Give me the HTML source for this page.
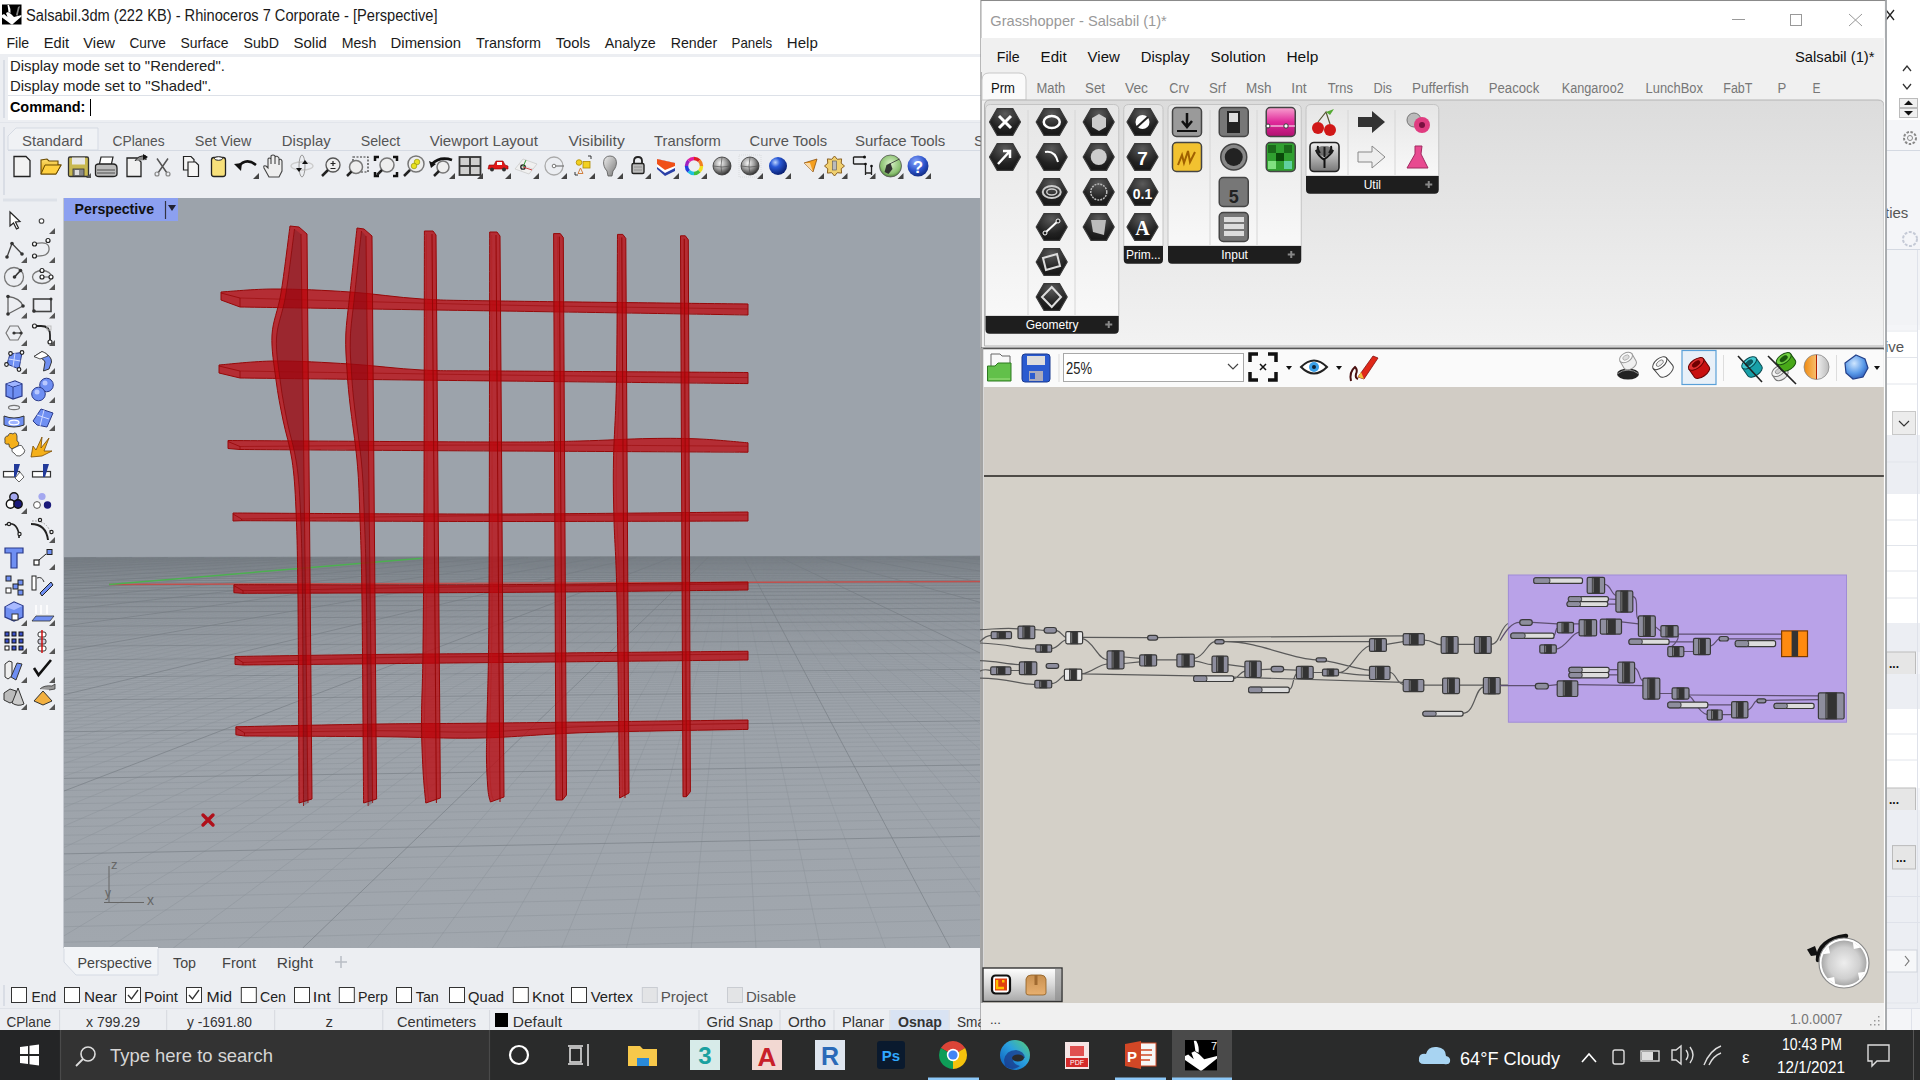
<!DOCTYPE html><html><head><meta charset="utf-8"><style>html,body{margin:0;padding:0;width:1920px;height:1080px;overflow:hidden;background:#eceef2}svg{display:block}</style></head><body><svg width="1920" height="1080" viewBox="0 0 1920 1080" font-family="Liberation Sans"><rect x="0" y="0" width="1920" height="1080" fill="#eceef2" />
<rect x="0" y="0" width="1920" height="30" fill="#ffffff" />
<rect x="2" y="4.5" width="19.5" height="20" fill="#000"/><path d="M2 15 L4 14 L7.5 17 L6 13 L8 12 L11 14 L14 17 L21.5 15 L21.5 16.5 L14 23 L12.5 24.5 L11.5 24.5 L2 17.5Z" fill="#fff"/><path d="M7.5 5 L9 5 Q11 9 10.5 13 L8.5 12 Q8 8 7.5 5Z" fill="#fff"/><path d="M3.5 11 Q5 7 7 5.5 L6 10Z" fill="#000"/><path d="M18 7 L20 6 L17.5 16 L16 15Z" fill="#888"/>
<text x="26" y="20.5" font-size="16" fill="#1a1a1a" textLength="411.5" lengthAdjust="spacingAndGlyphs" font-family="Liberation Sans" >Salsabil.3dm (222 KB) - Rhinoceros 7 Corporate - [Perspective]</text>
<rect x="0" y="30" width="1920" height="24" fill="#ffffff" />
<text x="6.5" y="48.2" font-size="15" fill="#1a1a1a" textLength="22.7" lengthAdjust="spacingAndGlyphs" font-family="Liberation Sans" >File</text>
<text x="43.75" y="48.2" font-size="15" fill="#1a1a1a" textLength="25.2" lengthAdjust="spacingAndGlyphs" font-family="Liberation Sans" >Edit</text>
<text x="83.3" y="48.2" font-size="15" fill="#1a1a1a" textLength="31.7" lengthAdjust="spacingAndGlyphs" font-family="Liberation Sans" >View</text>
<text x="129.4" y="48.2" font-size="15" fill="#1a1a1a" textLength="36.5" lengthAdjust="spacingAndGlyphs" font-family="Liberation Sans" >Curve</text>
<text x="180.5" y="48.2" font-size="15" fill="#1a1a1a" textLength="48.1" lengthAdjust="spacingAndGlyphs" font-family="Liberation Sans" >Surface</text>
<text x="243.5" y="48.2" font-size="15" fill="#1a1a1a" textLength="35.5" lengthAdjust="spacingAndGlyphs" font-family="Liberation Sans" >SubD</text>
<text x="293.5" y="48.2" font-size="15" fill="#1a1a1a" textLength="33.3" lengthAdjust="spacingAndGlyphs" font-family="Liberation Sans" >Solid</text>
<text x="341.7" y="48.2" font-size="15" fill="#1a1a1a" textLength="34.6" lengthAdjust="spacingAndGlyphs" font-family="Liberation Sans" >Mesh</text>
<text x="390.6" y="48.2" font-size="15" fill="#1a1a1a" textLength="70.4" lengthAdjust="spacingAndGlyphs" font-family="Liberation Sans" >Dimension</text>
<text x="476" y="48.2" font-size="15" fill="#1a1a1a" textLength="65" lengthAdjust="spacingAndGlyphs" font-family="Liberation Sans" >Transform</text>
<text x="555.7" y="48.2" font-size="15" fill="#1a1a1a" textLength="34.5" lengthAdjust="spacingAndGlyphs" font-family="Liberation Sans" >Tools</text>
<text x="604.8" y="48.2" font-size="15" fill="#1a1a1a" textLength="51.0" lengthAdjust="spacingAndGlyphs" font-family="Liberation Sans" >Analyze</text>
<text x="670.7" y="48.2" font-size="15" fill="#1a1a1a" textLength="46.5" lengthAdjust="spacingAndGlyphs" font-family="Liberation Sans" >Render</text>
<text x="731.5" y="48.2" font-size="15" fill="#1a1a1a" textLength="40.7" lengthAdjust="spacingAndGlyphs" font-family="Liberation Sans" >Panels</text>
<text x="786.8" y="48.2" font-size="15" fill="#1a1a1a" textLength="31.0" lengthAdjust="spacingAndGlyphs" font-family="Liberation Sans" >Help</text>
<rect x="0" y="54" width="1920" height="3" fill="#eceef2" />
<rect x="8" y="57" width="1912" height="63" fill="#ffffff" />
<line x1="4" y1="60" x2="4" y2="118" stroke="#d9dde5" stroke-width="2" />
<text x="9.9" y="71" font-size="15" fill="#222" textLength="215.1" lengthAdjust="spacingAndGlyphs" font-family="Liberation Sans" >Display mode set to &quot;Rendered&quot;.</text>
<text x="9.9" y="91" font-size="15" fill="#222" textLength="201.6" lengthAdjust="spacingAndGlyphs" font-family="Liberation Sans" >Display mode set to &quot;Shaded&quot;.</text>
<line x1="8" y1="95.5" x2="1920" y2="95.5" stroke="#dde1e8" stroke-width="1" />
<text x="9.9" y="112" font-size="15" fill="#000" font-weight="bold" textLength="75.5" lengthAdjust="spacingAndGlyphs" font-family="Liberation Sans" >Command:</text>
<line x1="90.5" y1="99" x2="90.5" y2="116" stroke="#000" stroke-width="1" />
<rect x="0" y="120" width="1920" height="80" fill="#eceef2" />
<line x1="0" y1="122.5" x2="1920" y2="122.5" stroke="#e2e5eb" stroke-width="1" />
<line x1="4" y1="127" x2="4" y2="195" stroke="#d9dde5" stroke-width="2" />
<line x1="8" y1="150.5" x2="980" y2="150.5" stroke="#d5dae3" stroke-width="1" />
<path d="M8 150 L8 136 L16 128 L98 128 L98 150 Z" fill="#f0f2f5" stroke="#d5dae3" stroke-width="1"/>
<text x="22.1" y="146" font-size="15" fill="#555" textLength="60.7" lengthAdjust="spacingAndGlyphs" font-family="Liberation Sans" >Standard</text>
<text x="112.5" y="146" font-size="15" fill="#555" textLength="52.1" lengthAdjust="spacingAndGlyphs" font-family="Liberation Sans" >CPlanes</text>
<text x="194.8" y="146" font-size="15" fill="#555" textLength="56.5" lengthAdjust="spacingAndGlyphs" font-family="Liberation Sans" >Set View</text>
<text x="281.8" y="146" font-size="15" fill="#555" textLength="48.9" lengthAdjust="spacingAndGlyphs" font-family="Liberation Sans" >Display</text>
<text x="360.7" y="146" font-size="15" fill="#555" textLength="39.6" lengthAdjust="spacingAndGlyphs" font-family="Liberation Sans" >Select</text>
<text x="429.7" y="146" font-size="15" fill="#555" textLength="108.2" lengthAdjust="spacingAndGlyphs" font-family="Liberation Sans" >Viewport Layout</text>
<text x="568.4" y="146" font-size="15" fill="#555" textLength="56.4" lengthAdjust="spacingAndGlyphs" font-family="Liberation Sans" >Visibility</text>
<text x="654" y="146" font-size="15" fill="#555" textLength="66.9" lengthAdjust="spacingAndGlyphs" font-family="Liberation Sans" >Transform</text>
<text x="749.6" y="146" font-size="15" fill="#555" textLength="77.5" lengthAdjust="spacingAndGlyphs" font-family="Liberation Sans" >Curve Tools</text>
<text x="855" y="146" font-size="15" fill="#555" textLength="90.3" lengthAdjust="spacingAndGlyphs" font-family="Liberation Sans" >Surface Tools</text>
<text x="974" y="146" font-size="15" fill="#555" textLength="10" lengthAdjust="spacingAndGlyphs" font-family="Liberation Sans" >S</text>
<defs><radialGradient id="sph" cx="0.4" cy="0.35" r="0.7"><stop offset="0" stop-color="#fafafa"/><stop offset="0.5" stop-color="#9a9a9a"/><stop offset="1" stop-color="#222"/></radialGradient><radialGradient id="bsph" cx="0.35" cy="0.3" r="0.75"><stop offset="0" stop-color="#bcd4ff"/><stop offset="0.35" stop-color="#2a5ad8"/><stop offset="1" stop-color="#061a6a"/></radialGradient><radialGradient id="gsph" cx="0.5" cy="0.4" r="0.65"><stop offset="0" stop-color="#d8f0c8"/><stop offset="0.7" stop-color="#8ac070"/><stop offset="1" stop-color="#3a6a2a"/></radialGradient><radialGradient id="hsph" cx="0.4" cy="0.3" r="0.75"><stop offset="0" stop-color="#8aa8ff"/><stop offset="0.6" stop-color="#2a50c8"/><stop offset="1" stop-color="#10287a"/></radialGradient><linearGradient id="bulb" x1="0" y1="0" x2="1" y2="1"><stop offset="0" stop-color="#eee"/><stop offset="1" stop-color="#777"/></linearGradient><linearGradient id="fold" x1="0" y1="0" x2="0" y2="1"><stop offset="0" stop-color="#ffe070"/><stop offset="1" stop-color="#e0a000"/></linearGradient></defs><path d="M14 156.5 L26 156.5 L30 160.5 L30 176.5 L14 176.5Z" fill="#f2f2f2" stroke="#222" stroke-width="1.3"/><path d="M41 174 L41 160 L47 159 L49 161 L58 161 L58 165 L61 165 L56 174Z" fill="url(#fold)" stroke="#6a4a00" stroke-width="1.1"/><path d="M41 174 L45 165 L61 165 L56 174Z" fill="#ffd040" stroke="#6a4a00" stroke-width="1"/><rect x="68.5" y="157" width="20" height="19.5" rx="1.5" fill="#c8b850" stroke="#333" stroke-width="1.3"/><rect x="72" y="157.5" width="13" height="7" fill="#e8e8e8"/><rect x="73" y="169" width="11" height="7" fill="#888" stroke="#333" stroke-width="0.8"/><rect x="75" y="170" width="4" height="5" fill="#ddd"/><path d="M91 178 L91 173 L86 178Z" fill="#555"/><path d="M99 166 L101 157 L113 157 L111 166Z" fill="#fff" stroke="#222" stroke-width="1.2"/><path d="M95.5 167 Q95 164 99 164 L113 164 Q117 164 117 168 L117 174 Q117 176.5 113 176.5 L99 176.5 Q95.5 176.5 95.5 174Z" fill="#bbb" stroke="#222" stroke-width="1.3"/><path d="M97 170 L115 170 M97 173 L115 173" stroke="#333" stroke-width="0.8"/><path d="M127 158 L137 158 L141 162 L141 176.5 L127 176.5Z" fill="#f0f0f0" stroke="#222" stroke-width="1.3"/><path d="M135 161 Q138 155 146 156 L146 160" fill="#888" stroke="#222" stroke-width="1"/><path d="M143 154 L148 157 L143 160Z" fill="#111"/><path d="M157 158.5 L167 173 M168 158.5 L158 173" stroke="#555" stroke-width="1.5"/><circle cx="157" cy="174" r="2" fill="none" stroke="#888" stroke-width="1.2"/><circle cx="168" cy="174" r="2" fill="none" stroke="#888" stroke-width="1.2"/><path d="M183.5 156.5 L191 156.5 L194 159.5 L194 170 L183.5 170Z" fill="#f5f5f5" stroke="#222" stroke-width="1.2"/><path d="M188 162 L195.5 162 L198.5 165 L198.5 176.5 L188 176.5Z" fill="#f5f5f5" stroke="#222" stroke-width="1.2"/><rect x="211.5" y="157.5" width="14" height="19" rx="2.5" fill="#f7e07a" stroke="#222" stroke-width="1.3"/><ellipse cx="218.5" cy="158.5" rx="4" ry="1.8" fill="#fff" stroke="#222" stroke-width="1"/><path d="M238 167 Q246 157 256 165" stroke="#111" stroke-width="2.6" fill="none"/><path d="M234 164 L241 171 L242 163Z" fill="#111"/><path d="M259 179 L259 173 L253 179Z" fill="#444"/><path d="M269 177 L264 168 Q263 165 266 166 L268 168 L268 159 Q269 157 271 159 L271 164 L271 156 Q273 154 275 156 L275 164 L275 157 Q277 155 279 158 L279 165 L279 160 Q281 158 282 161 L282 171 L279 177Z" fill="#eee" stroke="#444" stroke-width="1.1"/><ellipse cx="302" cy="166" rx="11" ry="4" fill="none" stroke="#ccc" stroke-width="1.3"/><ellipse cx="302" cy="166" rx="3" ry="11" fill="none" stroke="#999" stroke-width="1"/><path d="M305 160 L308 164 L302 164Z M299 172 L296 168 L302 168Z" fill="#111"/><circle cx="333" cy="165" r="7" fill="#eee" stroke="#555" stroke-width="1.3"/><path d="M333 161 L333 166 M330.5 163.5 L335.5 163.5 M330.5 168.5 L335.5 168.5" stroke="#222" stroke-width="1.2"/><line x1="328" y1="170" x2="322" y2="176" stroke="#222" stroke-width="2.5"/><rect x="353" y="157" width="15" height="15" fill="none" stroke="#333" stroke-width="1.2" stroke-dasharray="2 1.5"/><circle cx="356" cy="167" r="6.5" fill="#eee" stroke="#777" stroke-width="1.5"/><line x1="351.5" y1="171.5" x2="347" y2="176" stroke="#222" stroke-width="2.5"/><path d="M375 161 L375 157 L379 157 M393 157 L397 157 L397 161 M397 172 L397 176 L393 176 M379 176 L375 176 L375 172" stroke="#111" stroke-width="2.5" fill="none"/><circle cx="387" cy="165" r="7" fill="#eee" stroke="#777" stroke-width="1.5"/><line x1="382" y1="170" x2="377" y2="175" stroke="#222" stroke-width="2.5"/><circle cx="416" cy="164" r="8" fill="#eee" stroke="#777" stroke-width="1.5"/><circle cx="417" cy="162" r="2.8" fill="#e8e020" stroke="#8a8a00" stroke-width="0.6"/><circle cx="414" cy="166" r="2.8" fill="#e8e020" stroke="#8a8a00" stroke-width="0.6"/><line x1="410" y1="170" x2="404" y2="176" stroke="#222" stroke-width="2.5"/><circle cx="443" cy="167" r="6" fill="#eee" stroke="#777" stroke-width="1.5"/><line x1="439" y1="171" x2="434" y2="176" stroke="#222" stroke-width="2.5"/><path d="M432 164 Q440 156 452 160" stroke="#111" stroke-width="2.8" fill="none"/><path d="M429 161 L436 164 L431 168Z" fill="#111"/><path d="M455 179 L455 173 L449 179Z" fill="#444"/><rect x="459.5" y="157" width="21" height="18" fill="#cfcfcf" stroke="#333" stroke-width="1.8"/><line x1="470" y1="157" x2="470" y2="175" stroke="#333" stroke-width="1.8"/><line x1="459.5" y1="166" x2="480.5" y2="166" stroke="#333" stroke-width="1.8"/><path d="M483 179 L483 173 L477 179Z" fill="#444"/><path d="M488 169 L489 165 L494 165 L496 161 L503 161 L505 165 L508 166 L508 169Z" fill="#e01818" stroke="#8a0000" stroke-width="0.6"/><rect x="497" y="162" width="5" height="3" fill="#fff"/><circle cx="492" cy="169.5" r="2" fill="#333"/><circle cx="504" cy="169.5" r="2" fill="#333"/><path d="M511 179 L511 173 L505 179Z" fill="#444"/><path d="M515 169 L523 159 L537 164 L529 174Z" fill="#f0f0f0" stroke="#ccc" stroke-width="0.8"/><path d="M519 164 L533 169 M525 161 L521 171" stroke="#ccc" stroke-width="0.6"/><circle cx="523" cy="167" r="2.2" fill="none" stroke="#222" stroke-width="1.3"/><path d="M523 167 L532 170" stroke="#d04040" stroke-width="1"/><path d="M523 167 L526 160" stroke="#40a040" stroke-width="1"/><path d="M539 179 L539 173 L533 179Z" fill="#444"/><circle cx="554" cy="166" r="9" fill="none" stroke="#aaa" stroke-width="1.3"/><circle cx="554" cy="166" r="1.8" fill="#fff" stroke="#777"/><line x1="556" y1="166" x2="564" y2="166" stroke="#777" stroke-width="1.2"/><path d="M567 179 L567 173 L561 179Z" fill="#444"/><circle cx="579" cy="162.5" r="2.8" fill="#f2d020" stroke="#b08a00" stroke-width="0.8"/><rect x="583" y="161.5" width="7" height="6.5" fill="#f2d020" stroke="#b08a00" stroke-width="0.8"/><path d="M578 173.5 L580.5 168 L583 173.5Z" fill="none" stroke="#d08040" stroke-width="1"/><path d="M588 156 L591 156 L591 159 M575 172 L575 175 L578 175" stroke="#222" stroke-width="0.9" fill="none"/><path d="M595 179 L595 173 L589 179Z" fill="#444"/><path d="M610 156 C618 156 618 166 613 171 L612 176 L608 176 L607 171 C602 166 602 156 610 156Z" fill="url(#bulb)" stroke="#555" stroke-width="0.8"/><path d="M623 179 L623 173 L617 179Z" fill="#444"/><path d="M634 164 L634 161 Q634 157 638 157 Q642 157 642 161 L642 164" fill="none" stroke="#222" stroke-width="1.8"/><rect x="632" y="163.5" width="12" height="10" rx="1.5" fill="#bbb" stroke="#222" stroke-width="1.4"/><path d="M634 167 L642 167 M634 170 L642 170" stroke="#888" stroke-width="0.8"/><path d="M651 179 L651 173 L645 179Z" fill="#444"/><path d="M657 159 L675 163 L675 171 L665 176 L657 169Z" fill="#2a40a8"/><path d="M657 159 L675 163 L675 168 L665 173 L657 167Z" fill="#fff"/><path d="M657 159 L675 163 L675 166 L665 170 L657 164Z" fill="#f05018"/><path d="M679 179 L679 173 L673 179Z" fill="#444"/><path d="M694.00 158.50 A7.5 7.5 0 0 1 699.30 160.70" stroke="#e02020" stroke-width="3.5" fill="none"/><path d="M699.30 160.70 A7.5 7.5 0 0 1 701.50 166.00" stroke="#f08020" stroke-width="3.5" fill="none"/><path d="M701.50 166.00 A7.5 7.5 0 0 1 699.30 171.30" stroke="#f0e020" stroke-width="3.5" fill="none"/><path d="M699.30 171.30 A7.5 7.5 0 0 1 694.00 173.50" stroke="#40c040" stroke-width="3.5" fill="none"/><path d="M694.00 173.50 A7.5 7.5 0 0 1 688.70 171.30" stroke="#20c0e0" stroke-width="3.5" fill="none"/><path d="M688.70 171.30 A7.5 7.5 0 0 1 686.50 166.00" stroke="#2040e0" stroke-width="3.5" fill="none"/><path d="M686.50 166.00 A7.5 7.5 0 0 1 688.70 160.70" stroke="#a020c0" stroke-width="3.5" fill="none"/><path d="M688.70 160.70 A7.5 7.5 0 0 1 694.00 158.50" stroke="#e020a0" stroke-width="3.5" fill="none"/><path d="M707 179 L707 173 L701 179Z" fill="#444"/><circle cx="722" cy="166" r="9" fill="url(#sph)" stroke="#333" stroke-width="0.8"/><path d="M713 166 Q722 168 731 166 M722 157 Q720 166 722 175" stroke="#555" stroke-width="0.7" fill="none"/><rect x="739" y="155" width="22" height="22" fill="none" stroke="#ccc" stroke-width="0.6" stroke-dasharray="1 1"/><circle cx="750" cy="166" r="9" fill="url(#sph)" stroke="#333" stroke-width="0.8"/><path d="M741 166 Q750 168 759 166 M750 157 Q748 166 750 175" stroke="#555" stroke-width="0.7" fill="none"/><path d="M763 179 L763 173 L757 179Z" fill="#444"/><circle cx="778" cy="166" r="9" fill="url(#bsph)"/><path d="M791 179 L791 173 L785 179Z" fill="#444"/><path d="M804 163 L817 159 L813 172Z" fill="#f5a020" stroke="#8a5010" stroke-width="0.8"/><path d="M804 163 L810 163 L813 172" fill="#fff" opacity="0.6"/><path d="M824 179 L824 173 L818 179Z" fill="#444"/><polygon points="844.5,166.0 841.2,168.8 841.6,173.1 837.3,172.7 834.5,176.0 831.7,172.7 827.4,173.1 827.8,168.8 824.5,166.0 827.8,163.2 827.4,158.9 831.7,159.3 834.5,156.0 837.3,159.3 841.6,158.9 841.2,163.2" fill="#f0d070" stroke="#8a6020" stroke-width="1"/><rect x="832.5" y="161" width="4" height="9" fill="#bbb" stroke="#555" stroke-width="0.6"/><path d="M847.5 179 L847.5 173 L841.5 179Z" fill="#444"/><path d="M853.5 157 L864.5 157 M853.5 157 L853.5 164 M853.5 164 L865.5 164 L865.5 175 M865.5 173 L871.5 173 M871.5 166 L871.5 175" stroke="#222" stroke-width="1.3" fill="none"/><circle cx="864.5" cy="157" r="1.5" fill="#111"/><circle cx="865.5" cy="164" r="1.3" fill="#111"/><circle cx="871.5" cy="166" r="1.3" fill="#111"/><path d="M875.5 179 L875.5 173 L869.5 179Z" fill="#444"/><circle cx="890.5" cy="166" r="11" fill="url(#gsph)" stroke="#555" stroke-width="0.8"/><path d="M884.5 172 L886.5 165 L890.5 163 L892.5 169 L888.5 174Z" fill="#333"/><path d="M889.5 164 L899.5 159" stroke="#333" stroke-width="0.8"/><path d="M903.5 179 L903.5 173 L897.5 179Z" fill="#444"/><circle cx="918" cy="166" r="10.5" fill="url(#hsph)"/><text x="918" y="172.5" font-size="17" font-weight="bold" fill="#fff" text-anchor="middle" font-family="Liberation Sans">?</text><path d="M931 179 L931 173 L925 179Z" fill="#444"/>
<line x1="3" y1="200" x2="57" y2="200" stroke="#dde1e8" stroke-width="3" />
<path d="M10 212 L10 226 L13.5 223 L16.5 229 L18.5 228 L15.5 222 L20 221.5Z" fill="#fff" stroke="#222" stroke-width="1.2"/><circle cx="41.5" cy="221" r="2.3" fill="#fff" stroke="#444" stroke-width="1.1"/><path d="M55 234 L55 228 L49 234Z" fill="#555"/><path d="M7 257 L12 243.5 L22 254" fill="none" stroke="#444" stroke-width="1.3"/><circle cx="7" cy="257" r="1.8" fill="#333"/><circle cx="12" cy="243.5" r="1.8" fill="#333"/><circle cx="22" cy="254" r="1.8" fill="#333"/><path d="M27 263 L27 257 L21 263Z" fill="#555"/><path d="M34.5 244 Q50 240 49 250 Q48 257 34.5 256" fill="none" stroke="#777" stroke-width="1.3"/><circle cx="34.5" cy="244" r="2" fill="#fff" stroke="#222" stroke-width="1.2"/><circle cx="48" cy="240.5" r="2" fill="#fff" stroke="#222" stroke-width="1.2"/><circle cx="34.5" cy="256" r="2" fill="#fff" stroke="#222" stroke-width="1.2"/><path d="M55 263 L55 257 L49 263Z" fill="#555"/><circle cx="14" cy="277" r="9.5" fill="none" stroke="#777" stroke-width="1.3"/><path d="M14.5 277 L20.5 270.5" stroke="#333" stroke-width="1.6"/><circle cx="14.5" cy="277" r="1.8" fill="#333"/><circle cx="20.5" cy="270.5" r="1.8" fill="#333"/><path d="M27 290 L27 284 L21 290Z" fill="#555"/><ellipse cx="42" cy="277" rx="9.5" ry="6.5" fill="none" stroke="#777" stroke-width="1.3"/><path d="M42 277 L51 277" stroke="#555"/><circle cx="42" cy="270.5" r="2" fill="#fff" stroke="#222" stroke-width="1.2"/><circle cx="42" cy="277" r="2" fill="#fff" stroke="#222" stroke-width="1.2"/><circle cx="51" cy="277" r="2" fill="#fff" stroke="#222" stroke-width="1.2"/><path d="M55 290 L55 284 L49 290Z" fill="#555"/><path d="M8 296.5 Q20 298 23 306 L8 314 Z" fill="none" stroke="#666" stroke-width="1.3"/><circle cx="8" cy="296.5" r="1.8" fill="#333"/><circle cx="23" cy="306" r="1.8" fill="#333"/><circle cx="8" cy="314" r="1.8" fill="#333"/><path d="M27 318.5 L27 312.5 L21 318.5Z" fill="#555"/><rect x="33.5" y="299" width="17.5" height="12.5" fill="none" stroke="#444" stroke-width="1.6"/><circle cx="34" cy="311" r="1.8" fill="#333"/><circle cx="51" cy="299" r="1.5" fill="#333"/><path d="M55 318.5 L55 312.5 L49 318.5Z" fill="#555"/><polygon points="6,333 10,326 18,326 22,333 18,340 10,340" fill="none" stroke="#777" stroke-width="1.2"/><path d="M14 333 L21 333" stroke="#444" stroke-width="1.3"/><circle cx="14" cy="333" r="1.6" fill="#333"/><circle cx="21" cy="333" r="1.6" fill="#333"/><path d="M27 346 L27 340 L21 346Z" fill="#555"/><path d="M34.5 326 L41 326 Q50 326 50 335 L50 342" fill="none" stroke="#222" stroke-width="1.8"/><rect x="47" y="326" width="4" height="4" fill="none" stroke="#bbb"/><circle cx="34.5" cy="326" r="2" fill="#fff" stroke="#222" stroke-width="1.2"/><circle cx="50" cy="342" r="2" fill="#fff" stroke="#222" stroke-width="1.2"/><path d="M55 346 L55 340 L49 346Z" fill="#555"/><polygon points="10,354 22,352.5 19,369 7,364" fill="#6f8ff2" stroke="#2a3a8a" stroke-width="1"/><path d="M8.5 359 L20.5 361 M15 353 L13 367" stroke="#cfd9ff" stroke-width="1"/><circle cx="10.5" cy="353.5" r="1.8" fill="#fff" stroke="#222" stroke-width="1.2"/><circle cx="22" cy="352.5" r="1.8" fill="#fff" stroke="#222" stroke-width="1.2"/><circle cx="19" cy="369.5" r="1.8" fill="#fff" stroke="#222" stroke-width="1.2"/><circle cx="6.5" cy="364.5" r="1.8" fill="#fff" stroke="#222" stroke-width="1.2"/><path d="M27 374 L27 368 L21 374Z" fill="#555"/><path d="M34 356.5 L42 351.5 Q52 356 51.5 362 L49 369 L43.5 371 L45 362 Q44 358 34 356.5Z" fill="#6f8ff2" stroke="#333" stroke-width="1"/><path d="M34 356.5 L42 351.5 Q47 353 48 356 L40 359Z" fill="#fff" stroke="#333" stroke-width="0.8"/><path d="M55 374 L55 368 L49 374Z" fill="#555"/><path d="M6 384 L15 381 L22 384 L22 396 L13 399 L6 396Z" fill="#6f8ff2" stroke="#2a3a8a" stroke-width="1.2"/><path d="M6 384 L13 387 L22 384 M13 387 L13 399" stroke="#2a3a8a" fill="none"/><path d="M6.5 384 L15 381.5 L21.5 384 L13 386.5Z" fill="#9fb4ff"/><path d="M27 403 L27 397 L21 403Z" fill="#555"/><circle cx="46.5" cy="385" r="6.8" fill="#6f8ff2" stroke="#2a3a8a" stroke-width="1"/><circle cx="38.5" cy="394" r="6.8" fill="#6f8ff2" stroke="#2a3a8a" stroke-width="1"/><circle cx="45" cy="383" r="2.5" fill="#b8c8ff"/><circle cx="37" cy="392" r="2.5" fill="#b8c8ff"/><path d="M55 403 L55 397 L49 403Z" fill="#555"/><ellipse cx="14" cy="407.5" rx="5.5" ry="2.2" fill="none" stroke="#777" stroke-width="1.2"/><path d="M4 416 Q14 420 24 416 L24 425 Q14 429 4 425Z" fill="#6f8ff2" stroke="#333" stroke-width="1"/><ellipse cx="14" cy="422.5" rx="5" ry="2.3" fill="#9fb4ff" stroke="#fff" stroke-width="1.3"/><path d="M27 431 L27 425 L21 431Z" fill="#555"/><path d="M33 421 L41 409 L53 413 L47 427 L37 425Z" fill="#6f8ff2" stroke="#2a3a8a" stroke-width="1"/><path d="M37 415 L49 419 M44 410 L40 426" stroke="#cfd9ff"/><path d="M55 431 L55 425 L49 431Z" fill="#555"/><path d="M5 441 Q4 436 8 436 Q9 432 13 434 Q16 431 17 436 L17 441 Q20 442 18 446 L12 449 Q8 447 9 444 Q4 445 5 441Z" fill="#f5b01a" stroke="#333" stroke-width="0.8"/><path d="M12 449 L18 446 Q22 444 23 448 Q26 450 24 453 L20 456 Q16 457 14 453 Q11 452 12 449Z" fill="#fff" stroke="#333" stroke-width="0.8"/><path d="M31 457 L33 446 L36 450 L42 437 L41 448 L49 438 L44 451 L52 451 L42 456Z" fill="#f5b01a" stroke="#7a4a00" stroke-width="0.8"/><rect x="3.5" y="471.5" width="16" height="5.5" fill="#fff" stroke="#333" stroke-width="1.2"/><path d="M14 464 L20 464 L16 477 L14 477Z" fill="#223a9a"/><path d="M15 478 L20 472 L24 477 L19 482Z" fill="#fff" stroke="#666"/><rect x="32.5" y="471.5" width="18" height="5.5" fill="#fff" stroke="#333" stroke-width="1.2"/><path d="M43 464 L49 464 L45 477 L43 477Z" fill="#223a9a"/><circle cx="14" cy="497" r="4.2" fill="#a4a8f0" stroke="#111" stroke-width="1.4"/><circle cx="10.5" cy="504" r="4.2" fill="#fff" stroke="#111" stroke-width="1.4"/><circle cx="18" cy="504" r="4.2" fill="#1a1a7a" stroke="#111" stroke-width="1.4"/><path d="M27 514 L27 508 L21 514Z" fill="#555"/><circle cx="42" cy="496.5" r="3.6" fill="#a4a8f0"/><circle cx="37" cy="505" r="3.4" fill="#fff" stroke="#555"/><circle cx="47.5" cy="505" r="3.7" fill="#1a1a7a"/><path d="M5 525 Q16 520 19 534 L19 538" fill="none" stroke="#222" stroke-width="1.6"/><circle cx="9" cy="524" r="1.6" fill="#fff" stroke="#222" stroke-width="1.2"/><circle cx="19.5" cy="534" r="1.6" fill="#fff" stroke="#222" stroke-width="1.2"/><path d="M31 524 Q46 524 48 540" fill="none" stroke="#222" stroke-width="2"/><path d="M32 521 Q48 520 51 535" fill="none" stroke="#999" stroke-dasharray="1.5 1.5"/><circle cx="40" cy="520" r="1.6" fill="#fff" stroke="#222" stroke-width="1.2"/><circle cx="51.5" cy="532" r="1.6" fill="#fff" stroke="#222" stroke-width="1.2"/><path d="M55 543 L55 537 L49 543Z" fill="#555"/><path d="M5 548 L23 548 L23 553 L17 553 L17 568 L11 568 L11 553 L5 553Z" fill="#6f8ff2" stroke="#2a3a8a" stroke-width="1.2"/><rect x="34" y="560" width="5" height="5" fill="#fff" stroke="#222" stroke-width="1.2"/><rect x="47" y="549.5" width="5" height="5" fill="#6f8ff2" stroke="#222" stroke-width="1"/><path d="M39 560 L46 554" stroke="#222"/><path d="M55 570 L55 564 L49 570Z" fill="#555"/><rect x="6" y="576" width="5" height="5" fill="#6f8ff2" stroke="#222" stroke-width="1"/><rect x="18" y="580" width="5" height="5" fill="#6f8ff2" stroke="#222" stroke-width="1"/><rect x="6" y="588" width="5" height="5" fill="#fff" stroke="#222" stroke-width="1"/><rect x="18" y="590" width="5" height="5" fill="#6f8ff2" stroke="#222" stroke-width="1"/><rect x="13" y="584" width="5" height="5" fill="#6f8ff2" stroke="#222" stroke-width="1"/><rect x="32" y="576" width="4" height="14" fill="#fff" stroke="#222" stroke-width="1"/><path d="M40 593 L51 582 L53 585 L42 596Z" fill="#6f8ff2" stroke="#222" stroke-width="1"/><path d="M37 578 Q42 576 44 582" stroke="#333" fill="none"/><path d="M5 607 L14 602 L23 606 L23 617 L14 621 L5 617Z" fill="#6f8ff2" stroke="#2a3a8a" stroke-width="1.3"/><path d="M5.5 607 L14 602.5 L22.5 606 L14 610Z" fill="#a9baff"/><rect x="12" y="614" width="6" height="6" fill="#fff" stroke="#333"/><path d="M27 626 L27 620 L21 626Z" fill="#555"/><path d="M32 621 L36 616 L54 616 L50 621Z" fill="#6f8ff2" stroke="#333" stroke-width="0.8"/><path d="M36 605 L36 614 M41 605 L41 614 M47 605 L47 614" stroke="#fff" stroke-width="1.5"/><path d="M55 626 L55 620 L49 626Z" fill="#555"/><rect x="5" y="632" width="4" height="4" fill="#3a50c8" stroke="#111" stroke-width="1"/><rect x="12" y="632" width="4" height="4" fill="#3a50c8" stroke="#111" stroke-width="1"/><rect x="19" y="632" width="4" height="4" fill="#3a50c8" stroke="#111" stroke-width="1"/><rect x="5" y="639" width="4" height="4" fill="#3a50c8" stroke="#111" stroke-width="1"/><rect x="12" y="639" width="4" height="4" fill="#3a50c8" stroke="#111" stroke-width="1"/><rect x="19" y="639" width="4" height="4" fill="#3a50c8" stroke="#111" stroke-width="1"/><rect x="5" y="646" width="4" height="4" fill="#fff" stroke="#111" stroke-width="1"/><rect x="12" y="646" width="4" height="4" fill="#3a50c8" stroke="#111" stroke-width="1"/><rect x="19" y="646" width="4" height="4" fill="#3a50c8" stroke="#111" stroke-width="1"/><path d="M27 654 L27 648 L21 654Z" fill="#555"/><rect x="38" y="632" width="8" height="5" rx="2" fill="#fff" stroke="#333"/><rect x="38" y="639" width="8" height="5" rx="2" fill="#ccd" stroke="#333"/><rect x="38" y="646" width="8" height="5" rx="2" fill="#fff" stroke="#333"/><line x1="42" y1="630" x2="42" y2="653" stroke="#d01010" stroke-width="1.5"/><path d="M55 654 L55 648 L49 654Z" fill="#555"/><path d="M5 664 L9 661 L12 662 L12 676 L8 679 L5 677Z" fill="#eee" stroke="#333"/><path d="M11 677 L17 663 L22 664 L16 680Z" fill="#6f8ff2" stroke="#333"/><path d="M27 683 L27 677 L21 683Z" fill="#555"/><path d="M34 668 L38.5 675 L51 660" fill="none" stroke="#111" stroke-width="2.6"/><path d="M55 683 L55 677 L49 683Z" fill="#555"/><path d="M4 693 L10 689 L16 691 L16 700 L10 703 L4 700Z" fill="#bbb" stroke="#333"/><path d="M18 688 L24 704 Q18 707 12 703Z" fill="#ccc" stroke="#333"/><path d="M27 710 L27 704 L21 710Z" fill="#555"/><path d="M34 701 L43 691 L52 701 L43 705Z" fill="#f2b040" stroke="#333"/><path d="M40 689 Q44 685 52 686 L55 684 L55 689 L49 690" fill="#999" stroke="#333" stroke-width="0.8"/><path d="M55 710 L55 704 L49 710Z" fill="#555"/>
<svg x="64" y="198" width="916" height="750" viewBox="64 198 916 750" overflow="hidden">
<rect x="64" y="198" width="916" height="750" fill="#9ca3ab" />
<defs><linearGradient id="gnd" x1="0" y1="0" x2="0" y2="1"><stop offset="0" stop-color="#888d94"/><stop offset="0.08" stop-color="#959aa1"/><stop offset="0.25" stop-color="#9ba1a8"/><stop offset="1" stop-color="#a1a7ae"/></linearGradient></defs>
<rect x="64" y="557.5" width="916" height="390.5" fill="url(#gnd)" />
<path d="M64 959.02L980 935.50M64 942.24L980 919.65M64 926.73L980 905.01M64 912.37L980 891.43M64 899.01L980 878.82M64 886.57L980 867.07M64 874.95L980 856.09M64 864.08L980 845.82M64 844.28L980 827.12M64 835.25L980 818.59M64 826.73L980 810.54M64 818.68L980 802.94M64 811.06L980 795.74M64 803.84L980 788.92M64 796.99L980 782.45M64 790.47L980 776.29M64 784.28L980 770.44M64 772.74L980 759.54M64 767.36L980 754.46M64 762.22L980 749.61M64 757.30L980 744.96M64 752.59L980 740.51M64 748.08L980 736.25M64 743.74L980 732.15M64 739.58L980 728.22M64 735.59L980 724.45M64 728.04L980 717.32M64 724.48L980 713.95M64 721.04L980 710.71M64 717.73L980 707.58M64 714.53L980 704.56M64 711.44L980 701.64M64 708.46L980 698.82M64 705.57L980 696.10M64 702.78L980 693.46M64 697.47L980 688.44M64 694.93L980 686.04M64 692.47L980 683.72M64 690.09L980 681.47M64 687.78L980 679.29M64 685.54L980 677.17M64 683.36L980 675.11M64 681.24L980 673.11M64 679.18L980 671.17M64 675.23L980 667.44M64 673.34L980 665.65M64 671.49L980 663.91M64 669.70L980 662.21M64 667.95L980 660.56M64 666.25L980 658.95M64 664.58L980 657.38M64 662.96L980 655.85M64 661.38L980 654.36M64 658.34L980 651.48M64 656.87L980 650.09M64 655.43L980 648.74M64 654.03L980 647.41M64 652.66L980 646.12M64 651.33L980 644.85M64 650.02L980 643.62M64 648.74L980 642.41M64 647.49L980 641.23M64 645.07L980 638.94M64 643.89L980 637.83M64 642.74L980 636.75M64 641.62L980 635.69M64 640.52L980 634.65M64 639.44L980 633.63M64 638.38L980 632.63M64 637.35L980 631.65M64 636.33L980 630.69M64 634.36L980 628.83M64 633.40L980 627.93M64 632.47L980 627.04M64 631.54L980 626.17M64 630.64L980 625.31M64 629.75L980 624.47M64 628.88L980 623.65M64 628.02L980 622.84M64 627.18L980 622.05M64 625.55L980 620.50M64 624.75L980 619.75M64 623.97L980 619.01M64 623.20L980 618.29M64 622.44L980 617.57M64 621.70L980 616.87M64 620.97L980 616.18M64 620.25L980 615.50M64 619.54L980 614.83M64 618.16L980 613.53M64 617.49L980 612.89M64 616.83L980 612.27M64 616.18L980 611.65M64 615.53L980 611.05M64 614.90L980 610.45M64 614.28L980 609.86M64 613.67L980 609.28M64 613.07L980 608.71M64 611.89L980 607.60M64 611.31L980 607.06M64 610.74L980 606.52M64 610.18L980 605.99M64 609.63L980 605.47M64 609.09L980 604.96M64 608.55L980 604.45M64 608.03L980 603.95M64 607.51L980 603.46M64 606.49L980 602.50M64 605.99L980 602.03M64 605.50L980 601.56M64 605.01L980 601.10M64 604.53L980 600.65M64 604.06L980 600.21M64 603.59L980 599.77M64 603.13L980 599.33M64 602.68L980 598.90M64 601.79L980 598.06M64 601.35L980 597.65M64 600.92L980 597.24M64 600.50L980 596.84M64 600.08L980 596.45M64 599.67L980 596.06M64 599.26L980 595.67M64 598.85L980 595.29M64 598.45L980 594.91M64 597.67L980 594.17M64 597.29L980 593.81M64 596.91L980 593.45M64 596.53L980 593.09M64 596.16L980 592.74M64 595.79L980 592.40M64 595.43L980 592.06M64 595.07L980 591.72M64 594.72L980 591.38M64 594.03L980 590.73M64 593.68L980 590.41M64 593.35L980 590.09M64 593.01L980 589.77M64 592.68L980 589.46M64 592.36L980 589.15M64 592.03L980 588.85M64 591.71L980 588.54M64 591.40L980 588.25M64 590.78L980 587.66M64 590.47L980 587.37M64 590.17L980 587.09M64 589.87L980 586.80M64 589.58L980 586.53M64 589.28L980 586.25M64 588.99L980 585.98M64 588.71L980 585.70M64 588.42L980 585.44M64 587.87L980 584.91M64 587.59L980 584.65M64 587.32L980 584.39M64 587.05L980 584.14M64 586.78L980 583.89M64 586.52L980 583.64M64 586.26L980 583.39M64 586.00L980 583.15M64 585.75L980 582.91M64 585.24L980 582.43M64 584.99L980 582.20M64 584.75L980 581.96M64 584.50L980 581.73M64 584.26L980 581.51M64 584.02L980 581.28M64 583.79L980 581.06M64 583.55L980 580.84M64 583.32L980 580.62M64 582.86L980 580.18M64 582.64L980 579.97M64 582.41L980 579.76M64 582.19L980 579.55M64 581.97L980 579.34M64 581.75L980 579.14M64 581.54L980 578.93M64 581.33L980 578.73M64 581.11L980 578.53M64 580.70L980 578.14M64 580.49L980 577.94M64 580.29L980 577.75M64 580.08L980 577.56M64 579.88L980 577.37M64 579.68L980 577.18M64 579.49L980 577.00M64 579.29L980 576.81M64 579.10L980 576.63M64 578.72L980 576.27M64 578.53L980 576.09M64 578.34L980 575.91M64 578.16L980 575.74M64 577.97L980 575.56M64 577.79L980 575.39M64 577.61L980 575.22M64 577.43L980 575.05M64 577.25L980 574.88M64 576.90L980 574.55M64 576.73L980 574.39M64 576.55L980 574.22M64 576.38L980 574.06M64 576.21L980 573.90M64 576.05L980 573.74M64 575.88L980 573.59M64 575.71L980 573.43M64 575.55L980 573.28M64 575.23L980 572.97M64 575.07L980 572.82M64 574.91L980 572.67M64 574.75L980 572.52M64 574.59L980 572.37M64 574.44L980 572.22M64 574.28L980 572.08M64 574.13L980 571.93M64 573.98L980 571.79M64 573.68L980 571.51M64 573.53L980 571.37M64 573.38L980 571.23M64 573.24L980 571.09M64 573.09L980 570.95M64 572.95L980 570.82M64 572.81L980 570.68M64 572.66L980 570.55M64 572.52L980 570.42M64 572.25L980 570.15M64 572.11L980 570.02M64 571.97L980 569.90M64 571.84L980 569.77M64 571.70L980 569.64M64 571.57L980 569.51M64 571.43L980 569.39M64 571.30L980 569.26M64 571.17L980 569.14M64 570.91L980 568.90M64 570.78L980 568.77M64 570.66L980 568.65M64 570.53L980 568.54M64 570.41L980 568.42M64 570.28L980 568.30M64 570.16L980 568.18M64 570.03L980 568.07M64 569.91L980 567.95M64 569.67L980 567.72M64 569.55L980 567.61M64 569.43L980 567.50M64 569.32L980 567.39M64 569.20L980 567.28M64 569.08L980 567.17M64 568.97L980 567.06M64 568.85L980 566.95M64 568.74L980 566.84M64 568.51L980 566.63M64 568.40L980 566.52M64 568.29L980 566.42M64 568.18L980 566.31M64 568.07L980 566.21M64 567.96L980 566.11M64 567.85L980 566.00M64 567.74L980 565.90M64 567.64L980 565.80M64 567.43L980 565.60M64 567.32L980 565.50M64 567.22L980 565.40M64 567.11L980 565.31M64 567.01L980 565.21M64 566.91L980 565.11M64 566.81L980 565.02M64 566.71L980 564.92M64 566.61L980 564.83M64 566.41L980 564.64M64 566.31L980 564.55M64 566.21L980 564.45M64 566.11L980 564.36M64 566.02L980 564.27M64 565.92L980 564.18M64 565.83L980 564.09M64 565.73L980 564.00M64 565.64L980 563.91M64 565.45L980 563.74M64 565.36L980 563.65M64 565.27L980 563.56M64 565.17L980 563.47M64 565.08L980 563.39M64 564.99L980 563.30M64 564.90L980 563.22M64 564.81L980 563.13M64 564.72L980 563.05M64 564.55L980 562.88M64 564.46L980 562.80M64 564.37L980 562.72M64 564.29L980 562.64M64 564.20L980 562.56M64 564.12L980 562.48M64 564.03L980 562.40M64 563.95L980 562.32M64 563.86L980 562.24M64 563.70L980 562.08M64 563.62L980 562.00M64 563.53L980 561.93M64 563.45L980 561.85M64 563.37L980 561.77M64 563.29L980 561.70M64 563.21L980 561.62M64 563.13L980 561.54M64 563.05L980 561.47M64 562.89L980 561.32M64 562.82L980 561.25M64 562.74L980 561.17M64 562.66L980 561.10M64 562.59L980 561.03M64 562.51L980 560.96M64 562.43L980 560.89M64 562.36L980 560.81M64 562.28L980 560.74M64 562.13L980 560.60M64 562.06L980 560.53M64 561.99L980 560.46M64 561.91L980 560.40M64 561.84L980 560.33M64 561.77L980 560.26M64 561.70L980 560.19M64 561.63L980 560.12M64 561.55L980 560.06M64 561.41L980 559.92M64 561.34L980 559.86M64 561.27L980 559.79M64 561.20L980 559.72M64 561.13L980 559.66M64 561.07L980 559.59M64 561.00L980 559.53M64 560.93L980 559.47M64 560.86L980 559.40M64 560.73L980 559.28M64 560.66L980 559.21M64 560.60L980 559.15M64 560.53L980 559.09M64 560.46L980 559.03M64 560.40L980 558.96M64 560.33L980 558.90M64 560.27L980 558.84M64 560.21L980 558.78M64 560.08L980 558.66M64 560.02L980 558.60M64 559.95L980 558.54M64 559.89L980 558.48M64 559.83L980 558.42M64 559.77L980 558.37M64 559.70L980 558.31M64 559.64L980 558.25M64 559.58L980 558.19M64 559.46L980 558.08M64 559.40L980 558.02M64 559.34L980 557.96M64 559.28L980 557.91M64 559.22L980 557.85M64 559.16L980 557.79M64 559.10L980 557.74M64 559.04L980 557.68M64 558.99L980 557.63M64 558.87L980 557.52M64 558.81L980 557.47M64 558.76L980 557.41M64 558.70L980 557.36M64 558.64L980 557.30M64 558.59L980 557.25M64 558.53L980 557.20M64 558.47L980 557.15M64 558.42L980 557.09M64 558.31L980 556.99M64 558.25L980 556.94M64 558.20L980 556.89M64 558.14L980 556.83M64 558.09L980 556.78M64 558.04L980 556.73M64 557.98L980 556.68M64 557.93L980 556.63M64 557.88L980 556.58M64 557.77L980 556.48M64 557.72L980 556.43M64 557.67L980 556.38M64 557.61L980 556.33M64 557.56L980 556.28M64 557.51L980 556.24M-12581.81 948L-8.55 557.5M-12517.06 948L-4.95 557.5M-12452.32 948L-1.35 557.5M-12387.57 948L2.25 557.5M-12322.82 948L5.85 557.5M-12258.08 948L9.46 557.5M-12193.33 948L13.06 557.5M-12128.59 948L16.66 557.5M-12063.84 948L20.26 557.5M-11934.35 948L27.46 557.5M-11869.60 948L31.06 557.5M-11804.85 948L34.67 557.5M-11740.11 948L38.27 557.5M-11675.36 948L41.87 557.5M-11610.61 948L45.47 557.5M-11545.87 948L49.07 557.5M-11481.12 948L52.67 557.5M-11416.37 948L56.27 557.5M-11286.88 948L63.48 557.5M-11222.14 948L67.08 557.5M-11157.39 948L70.68 557.5M-11092.64 948L74.28 557.5M-11027.90 948L77.88 557.5M-10963.15 948L81.48 557.5M-10898.40 948L85.09 557.5M-10833.66 948L88.69 557.5M-10768.91 948L92.29 557.5M-10639.42 948L99.49 557.5M-10574.67 948L103.09 557.5M-10509.92 948L106.69 557.5M-10445.18 948L110.29 557.5M-10380.43 948L113.90 557.5M-10315.68 948L117.50 557.5M-10250.94 948L121.10 557.5M-10186.19 948L124.70 557.5M-10121.45 948L128.30 557.5M-9991.95 948L135.50 557.5M-9927.21 948L139.11 557.5M-9862.46 948L142.71 557.5M-9797.71 948L146.31 557.5M-9732.97 948L149.91 557.5M-9668.22 948L153.51 557.5M-9603.47 948L157.11 557.5M-9538.73 948L160.71 557.5M-9473.98 948L164.32 557.5M-9344.49 948L171.52 557.5M-9279.74 948L175.12 557.5M-9215.00 948L178.72 557.5M-9150.25 948L182.32 557.5M-9085.50 948L185.92 557.5M-9020.76 948L189.53 557.5M-8956.01 948L193.13 557.5M-8891.26 948L196.73 557.5M-8826.52 948L200.33 557.5M-8697.02 948L207.53 557.5M-8632.28 948L211.13 557.5M-8567.53 948L214.73 557.5M-8502.78 948L218.34 557.5M-8438.04 948L221.94 557.5M-8373.29 948L225.54 557.5M-8308.55 948L229.14 557.5M-8243.80 948L232.74 557.5M-8179.05 948L236.34 557.5M-8049.56 948L243.55 557.5M-7984.81 948L247.15 557.5M-7920.07 948L250.75 557.5M-7855.32 948L254.35 557.5M-7790.57 948L257.95 557.5M-7725.83 948L261.55 557.5M-7661.08 948L265.15 557.5M-7596.33 948L268.76 557.5M-7531.59 948L272.36 557.5M-7402.10 948L279.56 557.5M-7337.35 948L283.16 557.5M-7272.60 948L286.76 557.5M-7207.86 948L290.36 557.5M-7143.11 948L293.96 557.5M-7078.36 948L297.57 557.5M-7013.62 948L301.17 557.5M-6948.87 948L304.77 557.5M-6884.12 948L308.37 557.5M-6754.63 948L315.57 557.5M-6689.88 948L319.17 557.5M-6625.14 948L322.78 557.5M-6560.39 948L326.38 557.5M-6495.64 948L329.98 557.5M-6430.90 948L333.58 557.5M-6366.15 948L337.18 557.5M-6301.41 948L340.78 557.5M-6236.66 948L344.38 557.5M-6107.17 948L351.59 557.5M-6042.42 948L355.19 557.5M-5977.67 948L358.79 557.5M-5912.93 948L362.39 557.5M-5848.18 948L365.99 557.5M-5783.43 948L369.59 557.5M-5718.69 948L373.20 557.5M-5653.94 948L376.80 557.5M-5589.19 948L380.40 557.5M-5459.70 948L387.60 557.5M-5394.96 948L391.20 557.5M-5330.21 948L394.80 557.5M-5265.46 948L398.40 557.5M-5200.72 948L402.01 557.5M-5135.97 948L405.61 557.5M-5071.22 948L409.21 557.5M-5006.48 948L412.81 557.5M-4941.73 948L416.41 557.5M-4812.24 948L423.61 557.5M-4747.49 948L427.22 557.5M-4682.74 948L430.82 557.5M-4618.00 948L434.42 557.5M-4553.25 948L438.02 557.5M-4488.51 948L441.62 557.5M-4423.76 948L445.22 557.5M-4359.01 948L448.82 557.5M-4294.27 948L452.43 557.5M-4164.77 948L459.63 557.5M-4100.03 948L463.23 557.5M-4035.28 948L466.83 557.5M-3970.53 948L470.43 557.5M-3905.79 948L474.03 557.5M-3841.04 948L477.63 557.5M-3776.29 948L481.24 557.5M-3711.55 948L484.84 557.5M-3646.80 948L488.44 557.5M-3517.31 948L495.64 557.5M-3452.56 948L499.24 557.5M-3387.82 948L502.84 557.5M-3323.07 948L506.45 557.5M-3258.32 948L510.05 557.5M-3193.58 948L513.65 557.5M-3128.83 948L517.25 557.5M-3064.08 948L520.85 557.5M-2999.34 948L524.45 557.5M-2869.84 948L531.66 557.5M-2805.10 948L535.26 557.5M-2740.35 948L538.86 557.5M-2675.61 948L542.46 557.5M-2610.86 948L546.06 557.5M-2546.11 948L549.66 557.5M-2481.37 948L553.26 557.5M-2416.62 948L556.87 557.5M-2351.87 948L560.47 557.5M-2222.38 948L567.67 557.5M-2157.63 948L571.27 557.5M-2092.89 948L574.87 557.5M-2028.14 948L578.47 557.5M-1963.39 948L582.07 557.5M-1898.65 948L585.68 557.5M-1833.90 948L589.28 557.5M-1769.15 948L592.88 557.5M-1704.41 948L596.48 557.5M-1574.92 948L603.68 557.5M-1510.17 948L607.28 557.5M-1445.42 948L610.89 557.5M-1380.68 948L614.49 557.5M-1315.93 948L618.09 557.5M-1251.18 948L621.69 557.5M-1186.44 948L625.29 557.5M-1121.69 948L628.89 557.5M-1056.94 948L632.49 557.5M-927.45 948L639.70 557.5M-862.70 948L643.30 557.5M-797.96 948L646.90 557.5M-733.21 948L650.50 557.5M-668.47 948L654.10 557.5M-603.72 948L657.70 557.5M-538.97 948L661.31 557.5M-474.23 948L664.91 557.5M-409.48 948L668.51 557.5M-279.99 948L675.71 557.5M-215.24 948L679.31 557.5M-150.49 948L682.91 557.5M-85.75 948L686.51 557.5M-21.00 948L690.12 557.5M43.75 948L693.72 557.5M108.49 948L697.32 557.5M173.24 948L700.92 557.5M237.98 948L704.52 557.5M367.48 948L711.72 557.5M432.22 948L715.33 557.5M496.97 948L718.93 557.5M561.72 948L722.53 557.5M626.46 948L726.13 557.5M691.21 948L729.73 557.5M755.96 948L733.33 557.5M820.70 948L736.93 557.5M885.45 948L740.54 557.5M1014.94 948L747.74 557.5M1079.69 948L751.34 557.5M1144.43 948L754.94 557.5M1209.18 948L758.54 557.5M1273.93 948L762.14 557.5M1338.67 948L765.74 557.5M1403.42 948L769.35 557.5M1468.17 948L772.95 557.5M1532.91 948L776.55 557.5M1662.41 948L783.75 557.5M1727.15 948L787.35 557.5M1791.90 948L790.95 557.5M1856.65 948L794.56 557.5M1921.39 948L798.16 557.5M1986.14 948L801.76 557.5M2050.88 948L805.36 557.5M2115.63 948L808.96 557.5M2180.38 948L812.56 557.5M2309.87 948L819.77 557.5M2374.62 948L823.37 557.5M2439.36 948L826.97 557.5M2504.11 948L830.57 557.5M2568.86 948L834.17 557.5M2633.60 948L837.77 557.5M2698.35 948L841.37 557.5M2763.10 948L844.98 557.5M2827.84 948L848.58 557.5M2957.34 948L855.78 557.5M3022.08 948L859.38 557.5M3086.83 948L862.98 557.5M3151.57 948L866.58 557.5M3216.32 948L870.18 557.5M3281.07 948L873.79 557.5M3345.81 948L877.39 557.5M3410.56 948L880.99 557.5M3475.31 948L884.59 557.5M3604.80 948L891.79 557.5M3669.55 948L895.39 557.5M3734.29 948L899.00 557.5M3799.04 948L902.60 557.5M3863.79 948L906.20 557.5M3928.53 948L909.80 557.5M3993.28 948L913.40 557.5M4058.02 948L917.00 557.5M4122.77 948L920.60 557.5M4252.26 948L927.81 557.5M4317.01 948L931.41 557.5M4381.76 948L935.01 557.5M4446.50 948L938.61 557.5M4511.25 948L942.21 557.5M4576.00 948L945.81 557.5M4640.74 948L949.41 557.5M4705.49 948L953.02 557.5M4770.24 948L956.62 557.5M4899.73 948L963.82 557.5M4964.47 948L967.42 557.5M5029.22 948L971.02 557.5M5093.97 948L974.62 557.5M5158.71 948L978.23 557.5M5223.46 948L981.83 557.5M5288.21 948L985.43 557.5M5352.95 948L989.03 557.5M5417.70 948L992.63 557.5M5547.19 948L999.83 557.5M5611.94 948L1003.44 557.5M5676.69 948L1007.04 557.5M5741.43 948L1010.64 557.5M5806.18 948L1014.24 557.5M5870.92 948L1017.84 557.5M5935.67 948L1021.44 557.5M6000.42 948L1025.04 557.5M6065.16 948L1028.65 557.5" stroke="#8a9097" stroke-width="0.8" fill="none" opacity="0.55"/>
<path d="M64 853.87L980 836.18M64 778.37L980 764.86M64 731.74L980 720.82M64 700.08L980 690.91M64 677.18L980 669.28M64 659.84L980 652.90M64 646.26L980 640.07M64 635.34L980 629.75M64 626.36L980 621.27M64 618.85L980 614.18M64 612.47L980 608.15M64 606.99L980 602.98M64 602.23L980 598.48M64 598.06L980 594.54M64 594.37L980 591.05M64 591.09L980 587.95M64 588.14L980 585.17M64 585.49L980 582.67M64 583.09L980 580.40M64 580.90L980 578.33M64 578.91L980 576.45M64 577.07L980 574.72M64 575.39L980 573.12M64 573.83L980 571.65M64 572.38L980 570.29M64 571.04L980 569.02M64 569.79L980 567.84M64 568.62L980 566.73M64 567.53L980 565.70M64 566.51L980 564.73M64 565.54L980 563.82M64 564.64L980 562.97M64 563.78L980 562.16M64 562.97L980 561.40M64 562.21L980 560.67M64 561.48L980 559.99M64 560.80L980 559.34M64 560.14L980 558.72M64 559.52L980 558.13M64 558.93L980 557.57M64 558.36L980 557.04M64 557.82L980 556.53M-12646.56 948L-12.15 557.5M-11999.09 948L23.86 557.5M-11351.63 948L59.88 557.5M-10704.16 948L95.89 557.5M-10056.70 948L131.90 557.5M-9409.23 948L167.92 557.5M-8761.77 948L203.93 557.5M-8114.31 948L239.94 557.5M-7466.84 948L275.96 557.5M-6819.38 948L311.97 557.5M-6171.91 948L347.99 557.5M-5524.45 948L384.00 557.5M-4876.98 948L420.01 557.5M-4229.52 948L456.03 557.5M-3582.06 948L492.04 557.5M-2934.59 948L528.05 557.5M-2287.13 948L564.07 557.5M-1639.66 948L600.08 557.5M-992.20 948L636.10 557.5M-344.73 948L672.11 557.5M302.73 948L708.12 557.5M950.20 948L744.14 557.5M1597.66 948L780.15 557.5M2245.12 948L816.16 557.5M2892.59 948L852.18 557.5M3540.05 948L888.19 557.5M4187.52 948L924.21 557.5M4834.98 948L960.22 557.5M5482.45 948L996.23 557.5" stroke="#737980" stroke-width="1" fill="none" opacity="0.6"/>
<line x1="109" y1="584.5" x2="980" y2="581.5" stroke="#c0504d" stroke-width="1.3" />
<line x1="109" y1="584.5" x2="421.8" y2="558.3" stroke="#4caf50" stroke-width="1.5" />
<path d="M221 292 C230.0 291.5 253.5 289.0 275 289 C296.5 289.0 325.5 290.3 350 292 C374.5 293.7 397.0 297.5 422 299 C447.0 300.5 445.7 300.2 500 301 C554.3 301.8 706.7 303.5 748 304 L748 315 " fill="none"/><path d="M221 292 C230.0 291.5 253.5 289.0 275 289 C296.5 289.0 325.5 290.3 350 292 C374.5 293.7 397.0 297.5 422 299 C447.0 300.5 445.7 300.2 500 301 C554.3 301.8 706.7 303.5 748 304 L748 315 C706.7 314.3 584.7 312.3 500 311 C415.3 309.7 283.3 307.7 240 307 L221 300 Z" fill="rgba(188,6,12,0.75)" stroke="#960808" stroke-width="1"/><path d="M221 293 L240 298 L240 307" fill="none" stroke="#960808" stroke-width="0.8"/><path d="M240 298 C283.3 299.2 415.3 303.2 500 305 C584.7 306.8 706.7 308.3 748 309" fill="none" stroke="#960808" stroke-width="0.7" opacity="0.8"/><path d="M219 365 C228.3 364.3 253.2 361.2 275 361 C296.8 360.8 325.5 362.5 350 364 C374.5 365.5 397.0 368.8 422 370 C447.0 371.2 445.7 370.6 500 371 C554.3 371.4 706.7 372.2 748 372.5 L748 383.6 " fill="none"/><path d="M219 365 C228.3 364.3 253.2 361.2 275 361 C296.8 360.8 325.5 362.5 350 364 C374.5 365.5 397.0 368.8 422 370 C447.0 371.2 445.7 370.6 500 371 C554.3 371.4 706.7 372.2 748 372.5 L748 383.6 C706.7 383.2 584.7 381.9 500 381 C415.3 380.1 283.3 378.5 240 378 L219 373 Z" fill="rgba(188,6,12,0.75)" stroke="#960808" stroke-width="1"/><path d="M219 366 L240 371 L240 378" fill="none" stroke="#960808" stroke-width="0.8"/><path d="M240 371 C283.3 371.7 415.3 373.9 500 375 C584.7 376.1 706.7 377.2 748 377.6" fill="none" stroke="#960808" stroke-width="0.7" opacity="0.8"/><path d="M228 440.5 C273.3 440.8 441.3 441.9 500 442 C558.7 442.1 555.0 441.6 580 441 C605.0 440.4 630.0 438.8 650 438.5 C670.0 438.2 683.7 438.3 700 439 C716.3 439.7 740.0 442.2 748 442.8 L748 452.2 " fill="none"/><path d="M228 440.5 C273.3 440.8 441.3 441.9 500 442 C558.7 442.1 555.0 441.6 580 441 C605.0 440.4 630.0 438.8 650 438.5 C670.0 438.2 683.7 438.3 700 439 C716.3 439.7 740.0 442.2 748 442.8 L748 452.2 C706.7 452.0 584.7 451.4 500 451 C415.3 450.6 283.3 449.8 240 449.5 L228 448.5 Z" fill="rgba(188,6,12,0.75)" stroke="#960808" stroke-width="1"/><path d="M228 441.5 L240 446.5 L240 449.5" fill="none" stroke="#960808" stroke-width="0.8"/><path d="M240 446.5 C283.3 446.2 415.3 445.1 500 445 C584.7 444.9 706.7 446.0 748 446.2" fill="none" stroke="#960808" stroke-width="0.7" opacity="0.8"/><path d="M233 513 C277.5 513.2 414.2 514.2 500 514 C585.8 513.8 706.7 512.3 748 512 L748 521 " fill="none"/><path d="M233 513 C277.5 513.2 414.2 514.2 500 514 C585.8 513.8 706.7 512.3 748 512 L748 521 C706.7 521.1 584.4 521.5 500 521.5 C415.6 521.5 284.7 520.8 241.6 520.7 L233 521 Z" fill="rgba(188,6,12,0.75)" stroke="#960808" stroke-width="1"/><path d="M233 514 L241.6 519 L241.6 520.7" fill="none" stroke="#960808" stroke-width="0.8"/><path d="M241.6 519 C284.7 518.4 415.6 516.2 500 515.5 C584.4 514.8 706.7 515.1 748 515" fill="none" stroke="#960808" stroke-width="0.7" opacity="0.8"/><path d="M233.9 584.7 C278.2 584.7 414.3 585.2 500 584.7 C585.7 584.2 706.7 582.5 748 582 L748 590 " fill="none"/><path d="M233.9 584.7 C278.2 584.7 414.3 585.2 500 584.7 C585.7 584.2 706.7 582.5 748 582 L748 590 C706.7 590.4 584.2 591.9 500 592.4 C415.8 592.9 285.8 593.1 243 593.3 L233.9 592.7 Z" fill="rgba(188,6,12,0.75)" stroke="#960808" stroke-width="1"/><path d="M233.9 585.7 L243 590.7 L243 593.3" fill="none" stroke="#960808" stroke-width="0.8"/><path d="M243 590.7 C285.8 590.0 415.8 587.5 500 586.4 C584.2 585.3 706.7 584.4 748 584" fill="none" stroke="#960808" stroke-width="0.7" opacity="0.8"/><path d="M235 656.5 C259.2 656.1 335.8 654.9 380 654.4 C424.2 653.9 438.7 654.0 500 653.5 C561.3 653.0 706.7 651.6 748 651.25 L748 660 " fill="none"/><path d="M235 656.5 C259.2 656.1 335.8 654.9 380 654.4 C424.2 653.9 438.7 654.0 500 653.5 C561.3 653.0 706.7 651.6 748 651.25 L748 660 C706.7 660.4 561.3 661.9 500 662.5 C438.7 663.1 422.8 663.3 380 663.75 C337.2 664.2 265.8 664.8 243 665 L235 664.5 Z" fill="rgba(188,6,12,0.75)" stroke="#960808" stroke-width="1"/><path d="M235 657.5 L243 662.5 L243 665" fill="none" stroke="#960808" stroke-width="0.8"/><path d="M243 662.5 C265.8 661.7 337.2 658.8 380 657.75 C422.8 656.8 438.7 657.1 500 656.5 C561.3 655.9 706.7 654.4 748 654" fill="none" stroke="#960808" stroke-width="0.7" opacity="0.8"/><path d="M235.9 726.8 C259.9 726.3 336.0 724.6 380 724 C424.0 723.4 438.7 723.7 500 723 C561.3 722.3 706.7 720.5 748 720 L748 729.4 " fill="none"/><path d="M235.9 726.8 C259.9 726.3 336.0 724.6 380 724 C424.0 723.4 438.7 723.7 500 723 C561.3 722.3 706.7 720.5 748 720 L748 729.4 C721.3 729.9 632.7 731.1 588 732.5 C543.3 733.9 514.7 737.3 480 738 C445.3 738.7 419.2 737.0 380 736.7 C340.8 736.4 267.1 736.1 244.5 736 L235.9 734.8 Z" fill="rgba(188,6,12,0.75)" stroke="#960808" stroke-width="1"/><path d="M235.9 727.8 L244.5 732.8 L244.5 736" fill="none" stroke="#960808" stroke-width="0.8"/><path d="M244.5 732.8 C267.1 732.4 340.8 730.8 380 730.7 C419.2 730.6 445.3 732.7 480 732 C514.7 731.3 543.3 727.9 588 726.5 C632.7 725.1 721.3 723.9 748 723.4" fill="none" stroke="#960808" stroke-width="0.7" opacity="0.8"/><path d="M290 226 C288.5 237.2 284.0 274.8 281 293 C278.0 311.2 272.8 320.5 272 335 C271.2 349.5 274.2 365.8 276 380 C277.8 394.2 280.3 406.7 283 420 C285.7 433.3 289.8 445.0 292 460 C294.2 475.0 295.0 486.7 296 510 C297.0 533.3 297.5 551.2 298 600 C298.5 648.8 298.8 769.2 299 803 L312 799 L307 234 L299 227 Z" fill="rgba(188,6,12,0.75)" stroke="#960808" stroke-width="1"/><path d="M294.5 229 C293.0 240.2 288.5 277.8 285.5 296 C282.5 314.2 277.3 323.5 276.5 338 C275.7 352.5 278.7 368.8 280.5 383 C282.3 397.2 284.8 409.7 287.5 423 C290.2 436.3 294.3 448.0 296.5 463 C298.7 478.0 299.5 489.7 300.5 513 C301.5 536.3 302.0 554.2 302.5 603 C303.0 651.8 303.3 772.2 303.5 806" fill="none" stroke="#960808" stroke-width="0.8"/><path d="M294.5 229 C293.0 240.2 288.5 277.8 285.5 296 C282.5 314.2 277.3 323.5 276.5 338 C275.7 352.5 278.7 368.8 280.5 383 C282.3 397.2 284.8 409.7 287.5 423 C290.2 436.3 294.3 448.0 296.5 463 C298.7 478.0 299.5 489.7 300.5 513 C301.5 536.3 302.0 554.2 302.5 603 C303.0 651.8 303.3 772.2 303.5 806 L308 803 L301 234 Z" fill="rgba(70,20,30,0.22)" stroke="none"/><path d="M301 234 L308 803" fill="none" stroke="#960808" stroke-width="0.8"/><path d="M357 228 C355.8 238.8 351.9 275.2 350 293 C348.1 310.8 346.3 322.2 345.8 335 C345.3 347.8 346.3 358.5 347 370 C347.7 381.5 348.3 389.0 350 404 C351.7 419.0 355.4 442.3 357 460 C358.6 477.7 358.9 486.7 359.7 510 C360.5 533.3 361.4 551.2 362 600 C362.6 648.8 363.3 769.2 363.6 803 L376.6 799 L372 236 L364 229 Z" fill="rgba(188,6,12,0.75)" stroke="#960808" stroke-width="1"/><path d="M361.5 231 C360.3 241.8 356.4 278.2 354.5 296 C352.6 313.8 350.8 325.2 350.3 338 C349.8 350.8 350.8 361.5 351.5 373 C352.2 384.5 352.8 392.0 354.5 407 C356.2 422.0 359.9 445.3 361.5 463 C363.1 480.7 363.4 489.7 364.2 513 C365.0 536.3 365.9 554.2 366.5 603 C367.1 651.8 367.8 772.2 368.1 806" fill="none" stroke="#960808" stroke-width="0.8"/><path d="M361.5 231 C360.3 241.8 356.4 278.2 354.5 296 C352.6 313.8 350.8 325.2 350.3 338 C349.8 350.8 350.8 361.5 351.5 373 C352.2 384.5 352.8 392.0 354.5 407 C356.2 422.0 359.9 445.3 361.5 463 C363.1 480.7 363.4 489.7 364.2 513 C365.0 536.3 365.9 554.2 366.5 603 C367.1 651.8 367.8 772.2 368.1 806 L372.6 803 L366 236 Z" fill="rgba(70,20,30,0.22)" stroke="none"/><path d="M366 236 L372.6 803" fill="none" stroke="#960808" stroke-width="0.8"/><path d="M424.4 231 C424.3 275.8 424.2 430.2 424 500 C423.8 569.8 423.4 613.3 423 650 C422.6 686.7 421.5 700.0 421.5 720 C421.5 740.0 422.3 756.2 423 770 C423.7 783.8 425.3 797.5 425.8 803 L440.4 798 L436 235 L433 231 Z" fill="rgba(188,6,12,0.75)" stroke="#960808" stroke-width="1"/><path d="M432 234 L436.4 803" fill="none" stroke="#960808" stroke-width="1"/><path d="M426.4 234 C426.5 278.3 427.1 430.7 427 500 C426.9 569.3 426.4 613.3 426 650 C425.6 686.7 424.5 700.0 424.5 720 C424.5 740.0 425.3 756.5 426 770 C426.7 783.5 428.3 795.8 428.8 801" fill="none" stroke="#b01818" stroke-width="0.6" opacity="0.7"/><path d="M489.7 232 C489.6 293.3 489.4 518.7 489 600 C488.6 681.3 487.4 693.3 487 720 C486.6 746.7 486.3 748.3 486.5 760 C486.7 771.7 487.4 783.0 488 790 C488.6 797.0 490.0 800.0 490.4 802 L504 797 L500 236 L497 232 Z" fill="rgba(188,6,12,0.75)" stroke="#960808" stroke-width="1"/><path d="M496 235 L500 802" fill="none" stroke="#960808" stroke-width="1"/><path d="M491.7 235 C491.8 295.8 492.3 519.2 492 600 C491.7 680.8 490.4 693.3 490 720 C489.6 746.7 489.3 748.3 489.5 760 C489.7 771.7 490.4 783.3 491 790 C491.6 796.7 493.0 798.3 493.4 800" fill="none" stroke="#b01818" stroke-width="0.6" opacity="0.7"/><path d="M553.6 233.6 L560.3 233.6 L563.3 237.6 L566.5 795 L562.5 800 L556 800 Z" fill="rgba(188,6,12,0.75)" stroke="#960808" stroke-width="1"/><path d="M559.3 236.6 L562.5 800" fill="none" stroke="#960808" stroke-width="1"/><path d="M557.45 236.6 L560.25 798" fill="none" stroke="#b01818" stroke-width="0.6" opacity="0.7"/><path d="M617.5 234.4 C617.3 258.7 617.2 342.4 616.5 380 C615.8 417.6 613.9 436.7 613.5 460 C613.1 483.3 613.4 496.7 614 520 C614.6 543.3 616.1 553.7 617 600 C617.9 646.3 619.2 765.0 619.6 798 L629 793 L625.8 238.4 L622.8 234.4 Z" fill="rgba(188,6,12,0.75)" stroke="#960808" stroke-width="1"/><path d="M621.8 237.4 L625 798" fill="none" stroke="#960808" stroke-width="1"/><path d="M619.5 237.4 C619.5 261.2 620.0 342.9 619.5 380 C619.0 417.1 616.9 436.7 616.5 460 C616.1 483.3 616.4 496.7 617 520 C617.6 543.3 619.1 554.0 620 600 C620.9 646.0 622.2 763.3 622.6 796" fill="none" stroke="#b01818" stroke-width="0.6" opacity="0.7"/><path d="M680.5 235.8 L685.3 235.8 L688.3 239.8 L690.4 791.7 L686.4 796.7 L683 796.7 Z" fill="rgba(188,6,12,0.75)" stroke="#960808" stroke-width="1"/><path d="M684.3 238.8 L686.4 796.7" fill="none" stroke="#960808" stroke-width="1"/><path d="M683.4 238.8 L685.7 794.7" fill="none" stroke="#b01818" stroke-width="0.6" opacity="0.7"/>
<path d="M203 815 L213 825 M213 815 L203 825" stroke="#b0101a" stroke-width="3.4" stroke-linecap="round"/>
<g stroke="#666" stroke-width="1" fill="none"><line x1="109" y1="866" x2="109" y2="903"/><line x1="104" y1="902.5" x2="144" y2="902.5"/></g>
<text x="111" y="869" font-size="13" fill="#666" font-family="Liberation Sans" >z</text>
<text x="147" y="905" font-size="14" fill="#666" font-family="Liberation Sans" >x</text>
<text x="105" y="897" font-size="12" fill="#666" font-family="Liberation Sans" >y</text>
<rect x="64" y="198" width="114" height="23" fill="#8ca0f0" />
<text x="74.6" y="214" font-size="14" fill="#111" font-weight="bold" textLength="79.4" lengthAdjust="spacingAndGlyphs" font-family="Liberation Sans" >Perspective</text>
<line x1="165.5" y1="201" x2="165.5" y2="219" stroke="#334" stroke-width="1.2" />
<path d="M168 205 L176 205 L172 211Z" fill="#223"/>
</svg>
<line x1="63.5" y1="198" x2="63.5" y2="948" stroke="#c5c9d0" stroke-width="1" />
<path d="M64 948 L64 962 L76 975 L158 975 L158 948 Z" fill="#f2f4f7" stroke="#d5dae3" stroke-width="1"/>
<rect x="64" y="947" width="94" height="2" fill="#f2f4f7" />
<text x="77.5" y="967.5" font-size="15" fill="#444" textLength="74.5" lengthAdjust="spacingAndGlyphs" font-family="Liberation Sans" >Perspective</text>
<text x="173" y="967.5" font-size="15" fill="#444" textLength="23" lengthAdjust="spacingAndGlyphs" font-family="Liberation Sans" >Top</text>
<text x="222" y="967.5" font-size="15" fill="#444" textLength="34" lengthAdjust="spacingAndGlyphs" font-family="Liberation Sans" >Front</text>
<text x="276.8" y="967.5" font-size="15" fill="#444" textLength="36.2" lengthAdjust="spacingAndGlyphs" font-family="Liberation Sans" >Right</text>
<g stroke="#b8bcc4" stroke-width="1.5" fill="none"><line x1="341" y1="956" x2="341" y2="968"/><line x1="335" y1="962" x2="347" y2="962"/></g>
<line x1="4" y1="985" x2="4" y2="1006" stroke="#d9dde5" stroke-width="2" />
<rect x="11.5" y="987.5" width="15" height="15" fill="#ffffff" stroke="#333" stroke-width="1" />
<text x="31.6" y="1001.7" font-size="15" fill="#222" textLength="24.5" lengthAdjust="spacingAndGlyphs" font-family="Liberation Sans" >End</text>
<rect x="64.5" y="987.5" width="15" height="15" fill="#ffffff" stroke="#333" stroke-width="1" />
<text x="84" y="1001.7" font-size="15" fill="#222" textLength="33" lengthAdjust="spacingAndGlyphs" font-family="Liberation Sans" >Near</text>
<rect x="125.5" y="987.5" width="15" height="15" fill="#ffffff" stroke="#333" stroke-width="1" />
<path d="M128 995 L131.5 999 L138 990" stroke="#333" stroke-width="1.3" fill="none"/>
<text x="144" y="1001.7" font-size="15" fill="#222" textLength="34" lengthAdjust="spacingAndGlyphs" font-family="Liberation Sans" >Point</text>
<rect x="186.5" y="987.5" width="15" height="15" fill="#ffffff" stroke="#333" stroke-width="1" />
<path d="M189 995 L192.5 999 L199 990" stroke="#333" stroke-width="1.3" fill="none"/>
<text x="206.6" y="1001.7" font-size="15" fill="#222" textLength="25.5" lengthAdjust="spacingAndGlyphs" font-family="Liberation Sans" >Mid</text>
<rect x="241.3" y="987.5" width="15" height="15" fill="#ffffff" stroke="#333" stroke-width="1" />
<text x="260" y="1001.7" font-size="15" fill="#222" textLength="26" lengthAdjust="spacingAndGlyphs" font-family="Liberation Sans" >Cen</text>
<rect x="294.5" y="987.5" width="15" height="15" fill="#ffffff" stroke="#333" stroke-width="1" />
<text x="312.8" y="1001.7" font-size="15" fill="#222" textLength="18.0" lengthAdjust="spacingAndGlyphs" font-family="Liberation Sans" >Int</text>
<rect x="339.3" y="987.5" width="15" height="15" fill="#ffffff" stroke="#333" stroke-width="1" />
<text x="358" y="1001.7" font-size="15" fill="#222" textLength="30" lengthAdjust="spacingAndGlyphs" font-family="Liberation Sans" >Perp</text>
<rect x="396.5" y="987.5" width="15" height="15" fill="#ffffff" stroke="#333" stroke-width="1" />
<text x="415.8" y="1001.7" font-size="15" fill="#222" textLength="23.0" lengthAdjust="spacingAndGlyphs" font-family="Liberation Sans" >Tan</text>
<rect x="449.5" y="987.5" width="15" height="15" fill="#ffffff" stroke="#333" stroke-width="1" />
<text x="468" y="1001.7" font-size="15" fill="#222" textLength="36" lengthAdjust="spacingAndGlyphs" font-family="Liberation Sans" >Quad</text>
<rect x="513.3" y="987.5" width="15" height="15" fill="#ffffff" stroke="#333" stroke-width="1" />
<text x="532" y="1001.7" font-size="15" fill="#222" textLength="32" lengthAdjust="spacingAndGlyphs" font-family="Liberation Sans" >Knot</text>
<rect x="571.5" y="987.5" width="15" height="15" fill="#ffffff" stroke="#333" stroke-width="1" />
<text x="590.8" y="1001.7" font-size="15" fill="#222" textLength="42.0" lengthAdjust="spacingAndGlyphs" font-family="Liberation Sans" >Vertex</text>
<rect x="642.3" y="987.5" width="15" height="15" fill="#e3e4e6" stroke="#c9ccd2" stroke-width="1" />
<text x="660.7" y="1001.7" font-size="15" fill="#555" textLength="47.0" lengthAdjust="spacingAndGlyphs" font-family="Liberation Sans" >Project</text>
<rect x="727.5" y="987.5" width="15" height="15" fill="#e3e4e6" stroke="#c9ccd2" stroke-width="1" />
<text x="746" y="1001.7" font-size="15" fill="#555" textLength="50" lengthAdjust="spacingAndGlyphs" font-family="Liberation Sans" >Disable</text>
<rect x="0" y="1009" width="980" height="21" fill="#eceef2" />
<line x1="0" y1="1008.5" x2="980" y2="1008.5" stroke="#dfe2e8" stroke-width="1" />
<line x1="59.6" y1="1010" x2="59.6" y2="1030" stroke="#d5d8de" stroke-width="1" />
<line x1="166.7" y1="1010" x2="166.7" y2="1030" stroke="#d5d8de" stroke-width="1" />
<line x1="274.7" y1="1010" x2="274.7" y2="1030" stroke="#d5d8de" stroke-width="1" />
<line x1="382.8" y1="1010" x2="382.8" y2="1030" stroke="#d5d8de" stroke-width="1" />
<line x1="489.6" y1="1010" x2="489.6" y2="1030" stroke="#d5d8de" stroke-width="1" />
<line x1="699" y1="1010" x2="699" y2="1030" stroke="#d5d8de" stroke-width="1" />
<line x1="780" y1="1010" x2="780" y2="1030" stroke="#d5d8de" stroke-width="1" />
<line x1="834" y1="1010" x2="834" y2="1030" stroke="#d5d8de" stroke-width="1" />
<line x1="890" y1="1010" x2="890" y2="1030" stroke="#d5d8de" stroke-width="1" />
<line x1="949" y1="1010" x2="949" y2="1030" stroke="#d5d8de" stroke-width="1" />
<rect x="890.5" y="1010" width="58" height="20" fill="#d9e3f3" />
<text x="6.5" y="1026.5" font-size="15" fill="#333" textLength="44.5" lengthAdjust="spacingAndGlyphs" font-family="Liberation Sans" >CPlane</text>
<text x="86" y="1026.5" font-size="15" fill="#333" textLength="54" lengthAdjust="spacingAndGlyphs" font-family="Liberation Sans" >x 799.29</text>
<text x="187" y="1026.5" font-size="15" fill="#333" textLength="65" lengthAdjust="spacingAndGlyphs" font-family="Liberation Sans" >y -1691.80</text>
<text x="325.5" y="1026.5" font-size="15" fill="#333" textLength="7.5" lengthAdjust="spacingAndGlyphs" font-family="Liberation Sans" >z</text>
<text x="397" y="1026.5" font-size="15" fill="#333" textLength="79" lengthAdjust="spacingAndGlyphs" font-family="Liberation Sans" >Centimeters</text>
<text x="512.7" y="1026.5" font-size="15" fill="#333" textLength="49.3" lengthAdjust="spacingAndGlyphs" font-family="Liberation Sans" >Default</text>
<text x="706.6" y="1026.5" font-size="15" fill="#333" textLength="66.4" lengthAdjust="spacingAndGlyphs" font-family="Liberation Sans" >Grid Snap</text>
<text x="788" y="1026.5" font-size="15" fill="#333" textLength="38" lengthAdjust="spacingAndGlyphs" font-family="Liberation Sans" >Ortho</text>
<text x="842" y="1026.5" font-size="15" fill="#333" textLength="42" lengthAdjust="spacingAndGlyphs" font-family="Liberation Sans" >Planar</text>
<text x="898" y="1026.5" font-size="15" fill="#333" font-weight="bold" textLength="44" lengthAdjust="spacingAndGlyphs" font-family="Liberation Sans" >Osnap</text>
<text x="957" y="1026.5" font-size="15" fill="#333" textLength="28" lengthAdjust="spacingAndGlyphs" font-family="Liberation Sans" >Sma</text>
<rect x="495" y="1013" width="13" height="14" fill="#000" />
<rect x="1885" y="0" width="35" height="1030" fill="#f4f5f8" />
<rect x="1885" y="0" width="35" height="57" fill="#ffffff" />
<path d="M1886 10 L1894 20 M1894 10 L1886 20" stroke="#222" stroke-width="1.3"/>
<rect x="1885" y="57" width="35" height="63" fill="#ffffff" />
<path d="M1903 71 L1907 66 L1911 71" stroke="#333" fill="none" stroke-width="1.3"/><path d="M1903 84 L1907 89 L1911 84" stroke="#333" fill="none" stroke-width="1.3"/>
<rect x="1899.5" y="98.5" width="18" height="9" fill="#f0f0f0" stroke="#bbb" stroke-width="1" />
<path d="M1904 105 L1908.5 100.5 L1913 105Z" fill="#111"/>
<rect x="1899.5" y="108.5" width="18" height="9" fill="#f0f0f0" stroke="#bbb" stroke-width="1" />
<path d="M1904 111 L1908.5 115.5 L1913 111Z" fill="#111"/>
<line x1="1885" y1="150.5" x2="1920" y2="150.5" stroke="#d4d9e2" stroke-width="1" />
<circle cx="1910" cy="138" r="6" fill="none" stroke="#888" stroke-width="2" stroke-dasharray="2.5 1.5"/><circle cx="1910" cy="138" r="2.5" fill="none" stroke="#888"/>
<text x="1885" y="218" font-size="15" fill="#555" font-family="Liberation Sans" >ties</text>
<circle cx="1910" cy="239" r="7" fill="none" stroke="#c5cad6" stroke-width="2" stroke-dasharray="3 1.5"/>
<line x1="1885" y1="249.5" x2="1920" y2="249.5" stroke="#d4d9e2" stroke-width="1" />
<rect x="1885" y="250" width="35" height="75" fill="#f2f3f6" />
<rect x="1885" y="330" width="35" height="105" fill="#ffffff" />
<text x="1885" y="352" font-size="15" fill="#555" font-family="Liberation Sans" >ive</text>
<rect x="1892.5" y="411.5" width="23" height="23" fill="#ececec" stroke="#c8c8c8" stroke-width="1" />
<path d="M1899 421 L1904 426 L1909 421" stroke="#333" fill="none" stroke-width="1.2"/>
<rect x="1885" y="435" width="35" height="59" fill="#eceef3" />
<rect x="1885" y="494" width="35" height="158" fill="#ffffff" />
<rect x="1885" y="623" width="35" height="29" fill="#eceef3" />
<rect x="1886.5" y="652" width="29" height="22.5" fill="#e6e6e6" stroke="#bbb" stroke-width="1" />
<text x="1889" y="668" font-size="12" fill="#111" font-weight="bold" font-family="Liberation Sans" >...</text>
<rect x="1885" y="674" width="35" height="35" fill="#eceef3" />
<rect x="1885" y="709" width="35" height="79" fill="#ffffff" />
<rect x="1886.5" y="788" width="29" height="22.5" fill="#e6e6e6" stroke="#bbb" stroke-width="1" />
<text x="1889" y="804" font-size="12" fill="#111" font-weight="bold" font-family="Liberation Sans" >...</text>
<rect x="1885" y="810" width="35" height="23" fill="#eceef3" />
<rect x="1885" y="833" width="35" height="175" fill="#eceef3" />
<line x1="1885" y1="896.5" x2="1920" y2="896.5" stroke="#dfe2ea" stroke-width="1" />
<line x1="1885" y1="922.5" x2="1920" y2="922.5" stroke="#dfe2ea" stroke-width="1" />
<rect x="1892.5" y="845.6" width="23" height="23.4" fill="#e6e6e6" stroke="#bbb" stroke-width="1" />
<text x="1896" y="862" font-size="12" fill="#111" font-weight="bold" font-family="Liberation Sans" >...</text>
<line x1="1885" y1="331" x2="1917" y2="331" stroke="#e2e5eb" stroke-width="1" />
<line x1="1885" y1="357.5" x2="1917" y2="357.5" stroke="#e2e5eb" stroke-width="1" />
<line x1="1885" y1="384" x2="1917" y2="384" stroke="#e2e5eb" stroke-width="1" />
<line x1="1885" y1="462" x2="1917" y2="462" stroke="#e2e5eb" stroke-width="1" />
<line x1="1885" y1="520" x2="1917" y2="520" stroke="#e2e5eb" stroke-width="1" />
<line x1="1885" y1="545.5" x2="1917" y2="545.5" stroke="#e2e5eb" stroke-width="1" />
<line x1="1885" y1="571" x2="1917" y2="571" stroke="#e2e5eb" stroke-width="1" />
<line x1="1885" y1="598" x2="1917" y2="598" stroke="#e2e5eb" stroke-width="1" />
<line x1="1885" y1="734" x2="1917" y2="734" stroke="#e2e5eb" stroke-width="1" />
<line x1="1885" y1="760" x2="1917" y2="760" stroke="#e2e5eb" stroke-width="1" />
<line x1="1885" y1="1003" x2="1917" y2="1003" stroke="#e2e5eb" stroke-width="1" />
<line x1="1917.5" y1="250" x2="1917.5" y2="1003" stroke="#dfe2ea" stroke-width="1" />
<rect x="1886" y="950" width="31" height="22" fill="#f6f7f9" stroke="#d0d4dc" stroke-width="1" />
<rect x="1885" y="1008" width="35" height="22" fill="#f4f5f8" />
<line x1="1885" y1="1008.5" x2="1920" y2="1008.5" stroke="#dfe2ea" stroke-width="1" />
<line x1="1911.5" y1="1009" x2="1911.5" y2="1030" stroke="#dfe2ea" stroke-width="1" />
<path d="M1905 956 L1909 961 L1905 966" stroke="#777" fill="none" stroke-width="1.2"/>
<rect x="981" y="0.5" width="905" height="1030.5" fill="#f0f0f0" stroke="#8a8a8a" stroke-width="1.2" />
<rect x="981.6" y="1.1" width="903" height="36.9" fill="#ffffff" />
<text x="990.3" y="26" font-size="15" fill="#999" textLength="176.5" lengthAdjust="spacingAndGlyphs" font-family="Liberation Sans" >Grasshopper - Salsabil (1)*</text>
<line x1="1732" y1="19.5" x2="1745" y2="19.5" stroke="#999" stroke-width="1" />
<rect x="1790.5" y="14.5" width="11" height="11" fill="none" stroke="#999" stroke-width="1" />
<path d="M1849 14 L1862 26 M1862 14 L1849 26" stroke="#999" stroke-width="1"/>
<rect x="981" y="38" width="904" height="34" fill="#f0f0f0" />
<text x="996.8" y="61.9" font-size="15" fill="#111" textLength="22.8" lengthAdjust="spacingAndGlyphs" font-family="Liberation Sans" >File</text>
<text x="1040.6" y="61.9" font-size="15" fill="#111" textLength="26.0" lengthAdjust="spacingAndGlyphs" font-family="Liberation Sans" >Edit</text>
<text x="1087.6" y="61.9" font-size="15" fill="#111" textLength="32.2" lengthAdjust="spacingAndGlyphs" font-family="Liberation Sans" >View</text>
<text x="1140.8" y="61.9" font-size="15" fill="#111" textLength="48.8" lengthAdjust="spacingAndGlyphs" font-family="Liberation Sans" >Display</text>
<text x="1210.6" y="61.9" font-size="15" fill="#111" textLength="55.2" lengthAdjust="spacingAndGlyphs" font-family="Liberation Sans" >Solution</text>
<text x="1286.4" y="61.9" font-size="15" fill="#111" textLength="31.9" lengthAdjust="spacingAndGlyphs" font-family="Liberation Sans" >Help</text>
<text x="1795" y="61.5" font-size="15" fill="#111" textLength="79.5" lengthAdjust="spacingAndGlyphs" font-family="Liberation Sans" >Salsabil (1)*</text>
<path d="M982 100 L982 80 Q982 73 989 73 L1019 73 Q1026 73 1026 80 L1026 100 Z" fill="#fafafa" stroke="#c8c8c8" stroke-width="1"/>
<text x="991" y="92.8" font-size="14" fill="#111" textLength="24" lengthAdjust="spacingAndGlyphs" font-family="Liberation Sans" >Prm</text>
<text x="1036.4" y="92.8" font-size="14" fill="#777" textLength="28.9" lengthAdjust="spacingAndGlyphs" font-family="Liberation Sans" >Math</text>
<text x="1085" y="92.8" font-size="14" fill="#777" textLength="20" lengthAdjust="spacingAndGlyphs" font-family="Liberation Sans" >Set</text>
<text x="1125" y="92.8" font-size="14" fill="#777" textLength="23" lengthAdjust="spacingAndGlyphs" font-family="Liberation Sans" >Vec</text>
<text x="1169.3" y="92.8" font-size="14" fill="#777" textLength="19.7" lengthAdjust="spacingAndGlyphs" font-family="Liberation Sans" >Crv</text>
<text x="1209" y="92.8" font-size="14" fill="#777" textLength="17" lengthAdjust="spacingAndGlyphs" font-family="Liberation Sans" >Srf</text>
<text x="1246" y="92.8" font-size="14" fill="#777" textLength="25.5" lengthAdjust="spacingAndGlyphs" font-family="Liberation Sans" >Msh</text>
<text x="1291.3" y="92.8" font-size="14" fill="#777" textLength="15.4" lengthAdjust="spacingAndGlyphs" font-family="Liberation Sans" >Int</text>
<text x="1327.7" y="92.8" font-size="14" fill="#777" textLength="25.3" lengthAdjust="spacingAndGlyphs" font-family="Liberation Sans" >Trns</text>
<text x="1373.5" y="92.8" font-size="14" fill="#777" textLength="18.5" lengthAdjust="spacingAndGlyphs" font-family="Liberation Sans" >Dis</text>
<text x="1412" y="92.8" font-size="14" fill="#777" textLength="56.8" lengthAdjust="spacingAndGlyphs" font-family="Liberation Sans" >Pufferfish</text>
<text x="1488.75" y="92.8" font-size="14" fill="#777" textLength="50.5" lengthAdjust="spacingAndGlyphs" font-family="Liberation Sans" >Peacock</text>
<text x="1561.75" y="92.8" font-size="14" fill="#777" textLength="62.0" lengthAdjust="spacingAndGlyphs" font-family="Liberation Sans" >Kangaroo2</text>
<text x="1645.5" y="92.8" font-size="14" fill="#777" textLength="57.5" lengthAdjust="spacingAndGlyphs" font-family="Liberation Sans" >LunchBox</text>
<text x="1723.25" y="92.8" font-size="14" fill="#777" textLength="29.2" lengthAdjust="spacingAndGlyphs" font-family="Liberation Sans" >FabT</text>
<text x="1777.5" y="92.8" font-size="14" fill="#777" textLength="8.8" lengthAdjust="spacingAndGlyphs" font-family="Liberation Sans" >P</text>
<text x="1812.5" y="92.8" font-size="14" fill="#777" textLength="8.0" lengthAdjust="spacingAndGlyphs" font-family="Liberation Sans" >E</text>
<defs><linearGradient id="pnl" x1="0" y1="0" x2="0" y2="1"><stop offset="0" stop-color="#dcdcdc"/><stop offset="1" stop-color="#f2f2f2"/></linearGradient><radialGradient id="hexg" cx="0.5" cy="0.2" r="0.9"><stop offset="0" stop-color="#5a5a5a"/><stop offset="0.6" stop-color="#222"/><stop offset="1" stop-color="#111"/></radialGradient><linearGradient id="grp" x1="0" y1="0" x2="0" y2="1"><stop offset="0" stop-color="#e6e6e6"/><stop offset="1" stop-color="#f8f8f8"/></linearGradient></defs>
<path d="M984.5 346 L984.5 106 Q984.5 100 990 100 L1878 100 Q1884 100 1884 106 L1884 346 Z" fill="url(#pnl)" stroke="#b4b4b4" stroke-width="1"/>
<path d="M985.5 316 L985.5 109.5 Q985.5 104.5 990.5 104.5 L1113.75 104.5 Q1118.75 104.5 1118.75 109.5 L1118.75 316 Z" fill="url(#grp)" stroke="#c4c4c4" stroke-width="1"/>
<path d="M985.5 316 L1118.75 316 L1118.75 329.75 Q1118.75 333.75 1114.75 333.75 L989.5 333.75 Q985.5 333.75 985.5 329.75 Z" fill="#1e1e1e"/>
<text x="1052.125" y="329" font-size="12" fill="#fff" text-anchor="middle" font-family="Liberation Sans" >Geometry</text>
<path d="M1108.75 321 L1108.75 328 M1105.25 324.5 L1112.25 324.5" stroke="#888" stroke-width="2"/>
<path d="M1123.75 246 L1123.75 109.5 Q1123.75 104.5 1128.75 104.5 L1158 104.5 Q1163 104.5 1163 109.5 L1163 246 Z" fill="url(#grp)" stroke="#c4c4c4" stroke-width="1"/>
<path d="M1123.75 246 L1163 246 L1163 259.75 Q1163 263.75 1159 263.75 L1127.75 263.75 Q1123.75 263.75 1123.75 259.75 Z" fill="#1e1e1e"/>
<text x="1143.375" y="259" font-size="12" fill="#fff" text-anchor="middle" font-family="Liberation Sans" >Prim...</text>
<path d="M1168 246 L1168 109.5 Q1168 104.5 1173 104.5 L1296.25 104.5 Q1301.25 104.5 1301.25 109.5 L1301.25 246 Z" fill="url(#grp)" stroke="#c4c4c4" stroke-width="1"/>
<path d="M1168 246 L1301.25 246 L1301.25 259.75 Q1301.25 263.75 1297.25 263.75 L1172 263.75 Q1168 263.75 1168 259.75 Z" fill="#1e1e1e"/>
<text x="1234.625" y="259" font-size="12" fill="#fff" text-anchor="middle" font-family="Liberation Sans" >Input</text>
<path d="M1291.25 251 L1291.25 258 M1287.75 254.5 L1294.75 254.5" stroke="#888" stroke-width="2"/>
<path d="M1306 176 L1306 109.5 Q1306 104.5 1311 104.5 L1433.75 104.5 Q1438.75 104.5 1438.75 109.5 L1438.75 176 Z" fill="url(#grp)" stroke="#c4c4c4" stroke-width="1"/>
<path d="M1306 176 L1438.75 176 L1438.75 189.75 Q1438.75 193.75 1434.75 193.75 L1310 193.75 Q1306 193.75 1306 189.75 Z" fill="#1e1e1e"/>
<text x="1372.375" y="189" font-size="12" fill="#fff" text-anchor="middle" font-family="Liberation Sans" >Util</text>
<path d="M1428.75 181 L1428.75 188 M1425.25 184.5 L1432.25 184.5" stroke="#888" stroke-width="2"/>
<line x1="1028" y1="110" x2="1028" y2="315" stroke="#d6d6d6" stroke-width="1" />
<line x1="1075" y1="110" x2="1075" y2="315" stroke="#d6d6d6" stroke-width="1" />
<line x1="1210" y1="110" x2="1210" y2="245" stroke="#d6d6d6" stroke-width="1" />
<line x1="1257" y1="110" x2="1257" y2="245" stroke="#d6d6d6" stroke-width="1" />
<line x1="1348" y1="110" x2="1348" y2="175" stroke="#d6d6d6" stroke-width="1" />
<line x1="1395" y1="110" x2="1395" y2="175" stroke="#d6d6d6" stroke-width="1" />
<polygon points="1020.5,122.0 1012.8,135.4 997.2,135.4 989.5,122.0 997.2,108.6 1012.8,108.6" fill="url(#hexg)" stroke="#3a3a3a" stroke-width="1.2"/>
<polygon points="1020.5,157.0 1012.8,170.4 997.2,170.4 989.5,157.0 997.2,143.6 1012.8,143.6" fill="url(#hexg)" stroke="#3a3a3a" stroke-width="1.2"/>
<polygon points="1067.2,122.0 1059.5,135.4 1044.0,135.4 1036.2,122.0 1044.0,108.6 1059.5,108.6" fill="url(#hexg)" stroke="#3a3a3a" stroke-width="1.2"/>
<polygon points="1067.2,157.0 1059.5,170.4 1044.0,170.4 1036.2,157.0 1044.0,143.6 1059.5,143.6" fill="url(#hexg)" stroke="#3a3a3a" stroke-width="1.2"/>
<polygon points="1067.2,192.0 1059.5,205.4 1044.0,205.4 1036.2,192.0 1044.0,178.6 1059.5,178.6" fill="url(#hexg)" stroke="#3a3a3a" stroke-width="1.2"/>
<polygon points="1067.2,227.0 1059.5,240.4 1044.0,240.4 1036.2,227.0 1044.0,213.6 1059.5,213.6" fill="url(#hexg)" stroke="#3a3a3a" stroke-width="1.2"/>
<polygon points="1067.2,262.0 1059.5,275.4 1044.0,275.4 1036.2,262.0 1044.0,248.6 1059.5,248.6" fill="url(#hexg)" stroke="#3a3a3a" stroke-width="1.2"/>
<polygon points="1067.2,297.0 1059.5,310.4 1044.0,310.4 1036.2,297.0 1044.0,283.6 1059.5,283.6" fill="url(#hexg)" stroke="#3a3a3a" stroke-width="1.2"/>
<polygon points="1114.2,122.0 1106.5,135.4 1091.0,135.4 1083.2,122.0 1091.0,108.6 1106.5,108.6" fill="url(#hexg)" stroke="#3a3a3a" stroke-width="1.2"/>
<polygon points="1114.2,157.0 1106.5,170.4 1091.0,170.4 1083.2,157.0 1091.0,143.6 1106.5,143.6" fill="url(#hexg)" stroke="#3a3a3a" stroke-width="1.2"/>
<polygon points="1114.2,192.0 1106.5,205.4 1091.0,205.4 1083.2,192.0 1091.0,178.6 1106.5,178.6" fill="url(#hexg)" stroke="#3a3a3a" stroke-width="1.2"/>
<polygon points="1114.2,227.0 1106.5,240.4 1091.0,240.4 1083.2,227.0 1091.0,213.6 1106.5,213.6" fill="url(#hexg)" stroke="#3a3a3a" stroke-width="1.2"/>
<path d="M999 116 L1011 128 M1011 116 L999 128" stroke="#fff" stroke-width="3"/>
<path d="M998 164 L1010 151 M1003 151 L1010 151 L1010 158" stroke="#fff" stroke-width="2.5" fill="none"/>
<ellipse cx="1051.75" cy="122" rx="8" ry="6" fill="none" stroke="#fff" stroke-width="2.5"/>
<path d="M1045 152 Q1055 150 1058 162" stroke="#fff" stroke-width="2" fill="none"/>
<ellipse cx="1051.75" cy="192" rx="9" ry="6" fill="none" stroke="#ccc" stroke-width="2"/><ellipse cx="1051.75" cy="192" rx="5" ry="3" fill="none" stroke="#ccc" stroke-width="1.5"/>
<path d="M1045 233 L1058 221" stroke="#fff" stroke-width="2"/><circle cx="1045" cy="233" r="2" fill="#222" stroke="#fff"/><circle cx="1058" cy="221" r="2" fill="#222" stroke="#fff"/>
<path d="M1043 258 L1057 254 L1060 266 L1046 270Z" fill="none" stroke="#ddd" stroke-width="2"/>
<path d="M1051.75 287 L1061 297 L1051.75 307 L1042 297Z" fill="none" stroke="#ddd" stroke-width="2"/>
<path d="M1092 118 L1099 114 L1106 118 L1106 127 L1099 131 L1092 127Z" fill="#ccc"/>
<ellipse cx="1098.75" cy="157" rx="8" ry="8" fill="#ccc"/>
<circle cx="1098.75" cy="192" r="8" fill="none" stroke="#bbb" stroke-width="1.5" stroke-dasharray="2 1"/>
<path d="M1091 220 L1106 220 L1104 235 L1093 232Z" fill="#bbb"/>
<polygon points="1158.0,122.0 1150.2,135.4 1134.8,135.4 1127.0,122.0 1134.8,108.6 1150.2,108.6" fill="url(#hexg)" stroke="#3a3a3a" stroke-width="1.2"/>
<polygon points="1158.0,157.0 1150.2,170.4 1134.8,170.4 1127.0,157.0 1134.8,143.6 1150.2,143.6" fill="url(#hexg)" stroke="#3a3a3a" stroke-width="1.2"/>
<polygon points="1158.0,192.0 1150.2,205.4 1134.8,205.4 1127.0,192.0 1134.8,178.6 1150.2,178.6" fill="url(#hexg)" stroke="#3a3a3a" stroke-width="1.2"/>
<polygon points="1158.0,227.0 1150.2,240.4 1134.8,240.4 1127.0,227.0 1134.8,213.6 1150.2,213.6" fill="url(#hexg)" stroke="#3a3a3a" stroke-width="1.2"/>
<circle cx="1142.5" cy="122" r="7" fill="#fff"/><path d="M1137 127 L1148 117" stroke="#222" stroke-width="2"/>
<text x="1142.5" y="165" font-size="19" fill="#fff" font-weight="bold" text-anchor="middle" font-family="Liberation Sans" >7</text>
<text x="1142.5" y="199" font-size="14" fill="#fff" font-weight="bold" text-anchor="middle" font-family="Liberation Sans" >0.1</text>
<text x="1142.5" y="235" font-size="20" fill="#fff" font-weight="bold" text-anchor="middle" font-family="Liberation Serif" >A</text>
<rect x="1172.5" y="107.5" width="29" height="29" rx="4" fill="#9a9a9a" stroke="#444" stroke-width="1.5"/>
<path d="M1187 113 L1187 126 M1182 121 L1187 127 L1192 121" stroke="#111" stroke-width="2.5" fill="none"/><line x1="1177" y1="131" x2="1197" y2="131" stroke="#111" stroke-width="2"/>
<rect x="1172.5" y="142.5" width="29" height="29" rx="4" fill="#f2c230" stroke="#444" stroke-width="1.5"/>
<path d="M1178 165 L1182 155 L1184 163 L1188 151 L1190 162 L1195 152" stroke="#a06000" stroke-width="2" fill="none"/>
<rect x="1219.25" y="107.5" width="29" height="29" rx="4" fill="#777" stroke="#444" stroke-width="1.5"/>
<rect x="1227" y="111" width="13" height="22" fill="#222"/><rect x="1229" y="113" width="9" height="9" fill="#ddd"/>
<circle cx="1233.75" cy="157" r="13" fill="#888" stroke="#444" stroke-width="1.5"/><circle cx="1233.75" cy="157" r="9" fill="#222"/>
<rect x="1219.25" y="177.5" width="29" height="29" rx="4" fill="#777" stroke="#444" stroke-width="1.5"/>
<text x="1233.75" y="203" font-size="18" fill="#222" font-weight="bold" text-anchor="middle" font-family="Liberation Sans" >5</text>
<rect x="1219.25" y="212.5" width="29" height="29" rx="4" fill="#777" stroke="#444" stroke-width="1.5"/>
<rect x="1224" y="217" width="20" height="5" fill="#ddd"/><rect x="1224" y="224" width="20" height="5" fill="#ddd"/><rect x="1224" y="231" width="20" height="5" fill="#ddd"/>
<defs><linearGradient id="sldg" x1="0" y1="0" x2="0" y2="1"><stop offset="0" stop-color="#f8a0d0"/><stop offset="0.5" stop-color="#e02a9a"/><stop offset="1" stop-color="#b01070"/></linearGradient></defs>
<rect x="1266.25" y="107.5" width="29" height="29" rx="4" fill="url(#sldg)" stroke="#444" stroke-width="1.5"/><line x1="1266" y1="126" x2="1295" y2="126" stroke="#fff" stroke-width="1"/><circle cx="1268" cy="126" r="2" fill="#fff" stroke="#333"/><circle cx="1286" cy="126" r="2.2" fill="#fff" stroke="#333"/>
<rect x="1266.25" y="142.5" width="29" height="29" rx="4" fill="#30a030" stroke="#444" stroke-width="1.5"/>
<rect x="1268" y="145" width="8" height="8" fill="#1a6a1a"/><rect x="1284" y="145" width="8" height="8" fill="#1a6a1a"/><rect x="1276" y="153" width="8" height="8" fill="#0a4a0a"/><rect x="1268" y="161" width="8" height="8" fill="#80e080"/><rect x="1284" y="161" width="8" height="8" fill="#60d0a0"/>
<circle cx="1318" cy="128" r="6" fill="#d01818"/><circle cx="1330" cy="130" r="6" fill="#d01818"/><path d="M1318 122 L1326 112 L1330 124" stroke="#553" fill="none" stroke-width="1.2"/><path d="M1326 112 L1334 109 L1330 115Z" fill="#5a3"/>
<defs><linearGradient id="treeg" x1="0" y1="0" x2="0" y2="1"><stop offset="0" stop-color="#f0f0f0"/><stop offset="1" stop-color="#777"/></linearGradient></defs>
<rect x="1310" y="142.5" width="29" height="29" rx="4" fill="url(#treeg)" stroke="#222" stroke-width="1.6"/>
<path d="M1324.5 168 L1324.5 158 M1324.5 160 Q1318 156 1316 150 M1324.5 159 Q1331 155 1333 150 M1320 153 Q1317 149 1318 146 M1329 153 Q1332 149 1331 146 M1324.5 157 L1324.5 147" stroke="#111" stroke-width="2" fill="none"/><ellipse cx="1324.5" cy="151" rx="9" ry="5" fill="#222" opacity="0.55"/>
<path d="M1358 117 L1372 117 L1372 111 L1385 122 L1372 133 L1372 127 L1358 127Z" fill="#333"/>
<path d="M1358 152 L1372 152 L1372 146 L1385 157 L1372 168 L1372 162 L1358 162Z" fill="#eee" stroke="#888"/>
<circle cx="1414" cy="120" r="7" fill="#bbb" stroke="#777"/><circle cx="1422" cy="125" r="8" fill="#e03c80"/><circle cx="1422" cy="125" r="3" fill="#7a1040"/>
<path d="M1415 146 L1422 146 L1421 154 L1428 168 L1407 168 L1415 154Z" fill="#e84a90" stroke="#a02a60"/>
<line x1="981" y1="348.5" x2="1885" y2="348.5" stroke="#555" stroke-width="2" />
<rect x="983" y="349.5" width="900" height="37.5" fill="#fafafa" />
<path d="M991 368 L991 354 L1000 354 L1002 356 L1010 356 L1010 368Z" fill="#f8f8f8" stroke="#666" stroke-width="1"/><path d="M987.5 381 L987.5 366 L995 366 L998 363 L1011 363 L1011 381Z" fill="#62c04a" stroke="#2e7a20" stroke-width="1"/><path d="M989 379 L1010 379" stroke="#a0e080" stroke-width="1"/>
<rect x="1022" y="354" width="28" height="28" rx="3" fill="#2a5bd0" stroke="#1a3a90"/><rect x="1027" y="356" width="18" height="9" fill="#ddd"/><rect x="1029" y="371" width="14" height="10" fill="#aab"/><rect x="1030" y="373" width="5" height="6" fill="#2a5bd0"/>
<line x1="1059" y1="354" x2="1059" y2="382" stroke="#ddd" stroke-width="1" />
<rect x="1063.5" y="353.5" width="180" height="28" fill="#ffffff" stroke="#a8a8a8" stroke-width="1" />
<text x="1066" y="373.5" font-size="16" fill="#222" textLength="26" lengthAdjust="spacingAndGlyphs" font-family="Liberation Sans" >25%</text>
<path d="M1228 364 L1233 369 L1238 364" stroke="#444" fill="none" stroke-width="1.2"/>
<path d="M1250 362 L1250 354 L1258 354 M1268 354 L1276 354 L1276 362 M1276 372 L1276 380 L1268 380 M1258 380 L1250 380 L1250 372" stroke="#111" stroke-width="3.5" fill="none"/>
<path d="M1260 364 L1266 370 M1266 364 L1260 370" stroke="#111" stroke-width="1.5"/>
<path d="M1286 366 L1292 366 L1289 370Z" fill="#111"/><path d="M1336 366 L1342 366 L1339 370Z" fill="#111"/>
<path d="M1301 367 Q1314 354 1327 367 Q1314 380 1301 367Z" fill="#fff" stroke="#222" stroke-width="2"/><circle cx="1314" cy="367" r="5" fill="#3aa0e8"/><circle cx="1314" cy="367" r="2" fill="#123"/>
<path d="M1351 381 Q1349 372 1355 367 Q1358 370 1356 374 Q1355 378 1358 379" fill="none" stroke="#4a1010" stroke-width="2"/><path d="M1358 377 L1373 356 L1378 358 L1364 379Z" fill="#e02818" stroke="#801010" stroke-width="0.8"/><path d="M1358 377 L1361 372 L1364 379Z" fill="#f0c040"/>
<ellipse cx="1628" cy="374" rx="11" ry="5.5" fill="#222"/><path d="M1617 374 Q1628 366 1639 374" fill="none" stroke="#888" stroke-width="1"/>
<g transform="translate(1628,361) rotate(-30)"><path d="M-7 -4.0 L-7 4.0 A7 4.5 0 0 0 7 4.0 L7 -4.0Z" fill="#f0f0f0" stroke="#999" stroke-width="1"/><ellipse cx="0" cy="-4.0" rx="7" ry="4.5" fill="#fafafa" stroke="#999" stroke-width="1"/><ellipse cx="0" cy="-4.0" rx="3.5" ry="2.2" fill="#ddd" stroke="#999" stroke-width="0.6"/></g>
<g transform="translate(1663,367) rotate(-40)"><path d="M-8.5 -5.0 L-8.5 5.0 A8.5 4.5 0 0 0 8.5 5.0 L8.5 -5.0Z" fill="#fafafa" stroke="#444" stroke-width="1"/><ellipse cx="0" cy="-5.0" rx="8.5" ry="4.5" fill="#fff" stroke="#444" stroke-width="1"/><ellipse cx="0" cy="-5.0" rx="4.25" ry="2.2" fill="#eee" stroke="#444" stroke-width="0.6"/></g>
<rect x="1682" y="350.5" width="34" height="34" fill="#e8f0f8" stroke="#5aa0d8" stroke-width="1.2" />
<g transform="translate(1699,368) rotate(-35)"><path d="M-9 -5.0 L-9 5.0 A9 4.5 0 0 0 9 5.0 L9 -5.0Z" fill="#c81010" stroke="#600" stroke-width="1"/><ellipse cx="0" cy="-5.0" rx="9" ry="4.5" fill="#e03030" stroke="#600" stroke-width="1"/><ellipse cx="0" cy="-5.0" rx="4.5" ry="2.2" fill="#700000" stroke="#600" stroke-width="0.6"/></g>
<line x1="1723.5" y1="355" x2="1723.5" y2="381" stroke="#ddd" stroke-width="1" />
<g transform="translate(1752,367) rotate(-35)"><path d="M-8.5 -5.0 L-8.5 5.0 A8.5 4.5 0 0 0 8.5 5.0 L8.5 -5.0Z" fill="#18a0a8" stroke="#0a4a50" stroke-width="1"/><ellipse cx="0" cy="-5.0" rx="8.5" ry="4.5" fill="#40c8d0" stroke="#0a4a50" stroke-width="1"/><ellipse cx="0" cy="-5.0" rx="4.25" ry="2.2" fill="#0a5a60" stroke="#0a4a50" stroke-width="0.6"/></g>
<line x1="1738" y1="356" x2="1762" y2="382" stroke="#222" stroke-width="1.6"/>
<g transform="translate(1780,373) rotate(-35)"><path d="M-7.5 -2.5 L-7.5 2.5 A7.5 4.5 0 0 0 7.5 2.5 L7.5 -2.5Z" fill="#e8e8e8" stroke="#777" stroke-width="1"/><ellipse cx="0" cy="-2.5" rx="7.5" ry="4.5" fill="#f5f5f5" stroke="#777" stroke-width="1"/><ellipse cx="0" cy="-2.5" rx="3.75" ry="2.2" fill="#ccc" stroke="#777" stroke-width="0.6"/></g>
<g transform="translate(1786,362) rotate(-35)"><path d="M-8.5 -4.0 L-8.5 4.0 A8.5 4.5 0 0 0 8.5 4.0 L8.5 -4.0Z" fill="#48a818" stroke="#1a5010" stroke-width="1"/><ellipse cx="0" cy="-4.0" rx="8.5" ry="4.5" fill="#70d040" stroke="#1a5010" stroke-width="1"/><ellipse cx="0" cy="-4.0" rx="4.25" ry="2.2" fill="#1a5a0a" stroke="#1a5010" stroke-width="0.6"/></g>
<line x1="1768" y1="356" x2="1796" y2="384" stroke="#222" stroke-width="1.6"/>
<defs><linearGradient id="osph" x1="0" y1="0" x2="1" y2="0"><stop offset="0" stop-color="#f08a10"/><stop offset="0.5" stop-color="#f8c070"/><stop offset="0.5" stop-color="#b02000"/><stop offset="0.53" stop-color="#eee"/><stop offset="1" stop-color="#bbb"/></linearGradient></defs>
<circle cx="1816.5" cy="367" r="12.5" fill="url(#osph)" stroke="#888" stroke-width="0.8"/>
<line x1="1836.5" y1="355" x2="1836.5" y2="381" stroke="#ddd" stroke-width="1" />
<defs><radialGradient id="hept" cx="0.4" cy="0.35" r="0.7"><stop offset="0" stop-color="#cfe6ff"/><stop offset="0.6" stop-color="#5a9ae8"/><stop offset="1" stop-color="#2a5ab8"/></radialGradient></defs>
<polygon points="1856,355 1865,359 1868,368 1863,377 1853,379 1846,373 1845,363" fill="url(#hept)" stroke="#23408a" stroke-width="1.2"/>
<path d="M1874 366 L1880 366 L1877 370Z" fill="#111"/>
<rect x="984" y="387" width="900" height="616" fill="#d4d0c8" />
<line x1="981.8" y1="348" x2="981.8" y2="1003" stroke="#a3a3a3" stroke-width="3" />
<rect x="984" y="387" width="900" height="89" fill="#d1ccc5" />
<line x1="984" y1="476" x2="1884" y2="476" stroke="#4e4b47" stroke-width="2.2" />
<path d="M 980.0 629.7 C 996.9 628.9 1008.1 627.5 1018.0 628.9 M 980.0 641.6 C 985.6 635.9 988.4 635.4 991.2 635.4 M 980.0 643.0 C 1008.1 643.8 1022.2 649.4 1035.7 648.9 M 980.0 660.7 C 996.9 661.2 1008.1 664.6 1019.4 664.6 M 980.0 671.1 C 985.6 668.3 988.4 670.5 990.7 670.5 M 980.0 678.1 C 1008.1 678.1 1022.2 685.1 1034.8 684.3 M 1034.8 629.7 C 1039.1 629.7 1040.5 630.3 1044.1 630.3 M 1056.5 630.3 C 1061.6 631.7 1063.0 637.3 1065.8 637.3 M 1051.7 648.6 C 1058.7 647.7 1061.6 640.1 1065.8 640.1 M 1010.9 670.5 L 1019.4 670.5 M 1051.7 683.7 C 1058.7 683.2 1061.6 675.3 1064.4 675.3 M 1082.6 637.3 L 1147.6 637.6 L 1403.2 635.9 M 1082.6 638.7 C 1092.5 640.1 1098.1 659.8 1107.1 659.8 M 1081.8 673.9 C 1092.5 672.5 1098.1 664.6 1107.1 664.0 M 1081.8 673.9 L 1193.7 675.9 L 1403.2 682.3 M 1124.0 657.0 L 1139.7 658.4 M 1124.0 663.5 L 1139.7 661.8 M 1156.6 659.8 L 1176.9 659.8 M 1194.3 658.4 C 1205.0 657.0 1207.8 641.6 1214.8 641.6 M 1194.3 661.2 C 1202.2 661.2 1205.0 664.6 1212.0 664.6 M 1224.1 641.6 L 1369.5 641.6 M 1224.1 641.6 C 1261.2 641.6 1289.3 659.0 1316.1 659.8 C 1331.5 659.8 1351.2 668.3 1369.5 670.2 M 1228.0 664.6 L 1244.9 666.9 M 1233.7 678.7 C 1237.3 678.7 1240.1 671.9 1244.9 671.1 M 1261.2 669.7 L 1271.1 669.1 M 1283.7 669.7 L 1296.4 670.2 M 1289.3 689.4 C 1293.6 689.4 1292.1 678.1 1296.4 673.9 M 1313.2 672.5 L 1322.5 672.5 M 1338.5 672.5 C 1351.2 672.5 1356.8 650.0 1369.5 645.8 M 1338.5 672.5 C 1351.2 673.9 1356.8 675.3 1369.5 675.3 M 1386.4 644.4 L 1403.2 641.6 M 1424.3 640.1 C 1432.8 640.1 1434.2 644.4 1441.2 644.9 M 1458.1 644.4 L 1474.4 644.4 M 1491.2 644.4 C 1500.2 644.4 1500.2 626.1 1508.7 623.3 M 1390.0 672.5 C 1396.2 672.5 1396.2 683.7 1403.2 684.3 M 1423.8 685.1 L 1442.6 685.1 M 1459.5 685.1 L 1483.4 685.1 M 1500.2 685.1 L 1519.9 685.1 M 1463.1 713.3 C 1474.9 713.3 1474.9 688.0 1483.4 687.1" stroke="#5a5a5a" stroke-width="1.2" fill="none"/>
<rect x="991.2" y="631.7" width="20.299999999999955" height="7.0" rx="1.5" fill="#8e8e9e" stroke="#3a3a3a" stroke-width="1.2"/><rect x="997.087" y="631.7" width="8.52599999999998" height="7.0" fill="#333" stroke="#3a3a3a" stroke-width="0.8"/><line x1="998.087" y1="632.7" x2="998.087" y2="637.7" stroke="#777" stroke-width="1"/>
<rect x="1018.0" y="626.1" width="16.799999999999955" height="12.600000000000023" rx="1.5" fill="#8e8e9e" stroke="#3a3a3a" stroke-width="1.2"/><rect x="1022.872" y="626.1" width="7.0559999999999805" height="12.600000000000023" fill="#333" stroke="#3a3a3a" stroke-width="0.8"/><line x1="1023.872" y1="627.1" x2="1023.872" y2="637.7" stroke="#777" stroke-width="1"/>
<rect x="1044.1" y="627.5" width="12.400000000000091" height="5.600000000000023" rx="2.8000000000000114" fill="#8e8e9e" stroke="#3a3a3a" stroke-width="1.2"/>
<rect x="1035.7" y="644.9" width="16.0" height="7.300000000000068" rx="1.5" fill="#8e8e9e" stroke="#3a3a3a" stroke-width="1.2"/><rect x="1040.3400000000001" y="644.9" width="6.72" height="7.300000000000068" fill="#333" stroke="#3a3a3a" stroke-width="0.8"/><line x1="1041.3400000000001" y1="645.9" x2="1041.3400000000001" y2="651.2" stroke="#777" stroke-width="1"/>
<rect x="1065.8" y="631.7" width="16.799999999999955" height="12.099999999999909" rx="1.5" fill="#e8e8e8" stroke="#3a3a3a" stroke-width="1.2"/><rect x="1070.672" y="631.7" width="7.0559999999999805" height="12.099999999999909" fill="#333" stroke="#3a3a3a" stroke-width="0.8"/><line x1="1071.672" y1="632.7" x2="1071.672" y2="642.8" stroke="#777" stroke-width="1"/>
<rect x="1019.4" y="661.8" width="17.399999999999977" height="12.900000000000091" rx="1.5" fill="#8e8e9e" stroke="#3a3a3a" stroke-width="1.2"/><rect x="1024.446" y="661.8" width="7.30799999999999" height="12.900000000000091" fill="#333" stroke="#3a3a3a" stroke-width="0.8"/><line x1="1025.446" y1="662.8" x2="1025.446" y2="673.7" stroke="#777" stroke-width="1"/>
<rect x="1046.1" y="663.5" width="12.600000000000136" height="4.7999999999999545" rx="2.3999999999999773" fill="#8e8e9e" stroke="#3a3a3a" stroke-width="1.2"/>
<rect x="990.7" y="666.9" width="20.199999999999932" height="7.800000000000068" rx="1.5" fill="#8e8e9e" stroke="#3a3a3a" stroke-width="1.2"/><rect x="996.558" y="666.9" width="8.483999999999972" height="7.800000000000068" fill="#333" stroke="#3a3a3a" stroke-width="0.8"/><line x1="997.558" y1="667.9" x2="997.558" y2="673.7" stroke="#777" stroke-width="1"/>
<rect x="1034.8" y="680.4" width="16.90000000000009" height="7.600000000000023" rx="1.5" fill="#8e8e9e" stroke="#3a3a3a" stroke-width="1.2"/><rect x="1039.701" y="680.4" width="7.098000000000038" height="7.600000000000023" fill="#333" stroke="#3a3a3a" stroke-width="0.8"/><line x1="1040.701" y1="681.4" x2="1040.701" y2="687.0" stroke="#777" stroke-width="1"/>
<rect x="1064.4" y="669.1" width="17.399999999999864" height="11.299999999999955" rx="1.5" fill="#e8e8e8" stroke="#3a3a3a" stroke-width="1.2"/><rect x="1069.4460000000001" y="669.1" width="7.307999999999942" height="11.299999999999955" fill="#333" stroke="#3a3a3a" stroke-width="0.8"/><line x1="1070.4460000000001" y1="670.1" x2="1070.4460000000001" y2="679.4" stroke="#777" stroke-width="1"/>
<rect x="1107.1" y="650.8" width="16.90000000000009" height="18.0" rx="1.5" fill="#8e8e9e" stroke="#3a3a3a" stroke-width="1.2"/><rect x="1112.001" y="650.8" width="7.098000000000038" height="18.0" fill="#333" stroke="#3a3a3a" stroke-width="0.8"/><line x1="1113.001" y1="651.8" x2="1113.001" y2="667.8" stroke="#777" stroke-width="1"/>
<rect x="1139.7" y="654.8" width="16.899999999999864" height="11.200000000000045" rx="1.5" fill="#8e8e9e" stroke="#3a3a3a" stroke-width="1.2"/><rect x="1144.601" y="654.8" width="7.097999999999942" height="11.200000000000045" fill="#333" stroke="#3a3a3a" stroke-width="0.8"/><line x1="1145.601" y1="655.8" x2="1145.601" y2="665.0" stroke="#777" stroke-width="1"/>
<rect x="1147.6" y="635.4" width="10.100000000000136" height="4.7000000000000455" rx="2.3500000000000227" fill="#8e8e9e" stroke="#3a3a3a" stroke-width="1.2"/>
<rect x="1176.9" y="654.2" width="17.399999999999864" height="12.699999999999932" rx="1.5" fill="#8e8e9e" stroke="#3a3a3a" stroke-width="1.2"/><rect x="1181.9460000000001" y="654.2" width="7.307999999999942" height="12.699999999999932" fill="#333" stroke="#3a3a3a" stroke-width="0.8"/><line x1="1182.9460000000001" y1="655.2" x2="1182.9460000000001" y2="665.9" stroke="#777" stroke-width="1"/>
<rect x="1214.8" y="639.6" width="9.299999999999955" height="4.199999999999932" rx="2.099999999999966" fill="#8e8e9e" stroke="#3a3a3a" stroke-width="1.2"/>
<rect x="1212.0" y="656.2" width="16.0" height="16.299999999999955" rx="1.5" fill="#8e8e9e" stroke="#3a3a3a" stroke-width="1.2"/><rect x="1216.64" y="656.2" width="6.72" height="16.299999999999955" fill="#333" stroke="#3a3a3a" stroke-width="0.8"/><line x1="1217.64" y1="657.2" x2="1217.64" y2="671.5" stroke="#777" stroke-width="1"/>
<rect x="1193.7" y="675.9" width="40.0" height="5.600000000000023" rx="2" fill="#dcdcdc" stroke="#3a3a3a" stroke-width="1.2"/><rect x="1193.7" y="675.9" width="13.200000000000001" height="5.600000000000023" rx="2" fill="#8e8e9e" stroke="#3a3a3a" stroke-width="1"/>
<rect x="1244.9" y="661.2" width="16.299999999999955" height="16.299999999999955" rx="1.5" fill="#8e8e9e" stroke="#3a3a3a" stroke-width="1.2"/><rect x="1249.6270000000002" y="661.2" width="6.8459999999999805" height="16.299999999999955" fill="#333" stroke="#3a3a3a" stroke-width="0.8"/><line x1="1250.6270000000002" y1="662.2" x2="1250.6270000000002" y2="676.5" stroke="#777" stroke-width="1"/>
<rect x="1271.1" y="666.3" width="12.600000000000136" height="5.600000000000023" rx="2.8000000000000114" fill="#8e8e9e" stroke="#3a3a3a" stroke-width="1.2"/>
<rect x="1248.6" y="687.1" width="40.700000000000045" height="5.600000000000023" rx="2" fill="#dcdcdc" stroke="#3a3a3a" stroke-width="1.2"/><rect x="1248.6" y="687.1" width="13.431000000000015" height="5.600000000000023" rx="2" fill="#8e8e9e" stroke="#3a3a3a" stroke-width="1"/>
<rect x="1296.4" y="666.3" width="16.799999999999955" height="12.400000000000091" rx="1.5" fill="#8e8e9e" stroke="#3a3a3a" stroke-width="1.2"/><rect x="1301.2720000000002" y="666.3" width="7.0559999999999805" height="12.400000000000091" fill="#333" stroke="#3a3a3a" stroke-width="0.8"/><line x1="1302.2720000000002" y1="667.3" x2="1302.2720000000002" y2="677.7" stroke="#777" stroke-width="1"/>
<rect x="1316.1" y="657.9" width="10.400000000000091" height="3.8999999999999773" rx="1.9499999999999886" fill="#8e8e9e" stroke="#3a3a3a" stroke-width="1.2"/>
<rect x="1322.5" y="669.1" width="16.0" height="6.7999999999999545" rx="1.5" fill="#8e8e9e" stroke="#3a3a3a" stroke-width="1.2"/><rect x="1327.14" y="669.1" width="6.72" height="6.7999999999999545" fill="#333" stroke="#3a3a3a" stroke-width="0.8"/><line x1="1328.14" y1="670.1" x2="1328.14" y2="674.9" stroke="#777" stroke-width="1"/>
<rect x="1369.5" y="638.7" width="16.90000000000009" height="12.699999999999932" rx="1.5" fill="#8e8e9e" stroke="#3a3a3a" stroke-width="1.2"/><rect x="1374.401" y="638.7" width="7.098000000000038" height="12.699999999999932" fill="#333" stroke="#3a3a3a" stroke-width="0.8"/><line x1="1375.401" y1="639.7" x2="1375.401" y2="650.4" stroke="#777" stroke-width="1"/>
<rect x="1403.2" y="633.7" width="21.09999999999991" height="11.199999999999932" rx="1.5" fill="#8e8e9e" stroke="#3a3a3a" stroke-width="1.2"/><rect x="1409.319" y="633.7" width="8.861999999999961" height="11.199999999999932" fill="#333" stroke="#3a3a3a" stroke-width="0.8"/><line x1="1410.319" y1="634.7" x2="1410.319" y2="643.9" stroke="#777" stroke-width="1"/>
<rect x="1441.2" y="636.5" width="16.899999999999864" height="16.899999999999977" rx="1.5" fill="#8e8e9e" stroke="#3a3a3a" stroke-width="1.2"/><rect x="1446.101" y="636.5" width="7.097999999999942" height="16.899999999999977" fill="#333" stroke="#3a3a3a" stroke-width="0.8"/><line x1="1447.101" y1="637.5" x2="1447.101" y2="652.4" stroke="#777" stroke-width="1"/>
<rect x="1474.4" y="636.5" width="16.799999999999955" height="16.899999999999977" rx="1.5" fill="#8e8e9e" stroke="#3a3a3a" stroke-width="1.2"/><rect x="1479.2720000000002" y="636.5" width="7.0559999999999805" height="16.899999999999977" fill="#333" stroke="#3a3a3a" stroke-width="0.8"/><line x1="1480.2720000000002" y1="637.5" x2="1480.2720000000002" y2="652.4" stroke="#777" stroke-width="1"/>
<rect x="1369.5" y="666.3" width="20.5" height="13.200000000000045" rx="1.5" fill="#8e8e9e" stroke="#3a3a3a" stroke-width="1.2"/><rect x="1375.445" y="666.3" width="8.61" height="13.200000000000045" fill="#333" stroke="#3a3a3a" stroke-width="0.8"/><line x1="1376.445" y1="667.3" x2="1376.445" y2="678.5" stroke="#777" stroke-width="1"/>
<rect x="1403.2" y="679.5" width="20.59999999999991" height="12.100000000000023" rx="1.5" fill="#8e8e9e" stroke="#3a3a3a" stroke-width="1.2"/><rect x="1409.174" y="679.5" width="8.651999999999962" height="12.100000000000023" fill="#333" stroke="#3a3a3a" stroke-width="0.8"/><line x1="1410.174" y1="680.5" x2="1410.174" y2="690.6" stroke="#777" stroke-width="1"/>
<rect x="1442.6" y="678.1" width="16.90000000000009" height="15.5" rx="1.5" fill="#8e8e9e" stroke="#3a3a3a" stroke-width="1.2"/><rect x="1447.501" y="678.1" width="7.098000000000038" height="15.5" fill="#333" stroke="#3a3a3a" stroke-width="0.8"/><line x1="1448.501" y1="679.1" x2="1448.501" y2="692.6" stroke="#777" stroke-width="1"/>
<rect x="1483.4" y="677.5" width="16.799999999999955" height="16.399999999999977" rx="1.5" fill="#8e8e9e" stroke="#3a3a3a" stroke-width="1.2"/><rect x="1488.2720000000002" y="677.5" width="7.0559999999999805" height="16.399999999999977" fill="#333" stroke="#3a3a3a" stroke-width="0.8"/><line x1="1489.2720000000002" y1="678.5" x2="1489.2720000000002" y2="692.9" stroke="#777" stroke-width="1"/>
<rect x="1422.9" y="711.3" width="40.19999999999982" height="4.800000000000068" rx="2" fill="#dcdcdc" stroke="#3a3a3a" stroke-width="1.2"/><rect x="1422.9" y="711.3" width="13.265999999999941" height="4.800000000000068" rx="2" fill="#8e8e9e" stroke="#3a3a3a" stroke-width="1"/>
<rect x="1508.4" y="575" width="338.1" height="147.2" fill="#b9a2e8" stroke="#a08cd6" stroke-width="1" />
<path d="M 1604.6 584.4 C 1610.6 584.4 1611.6 594.7 1615.9 595.3 M 1608.4 599.0 L 1615.9 599.4 M 1607.8 604.1 L 1615.9 604.1 M 1632.8 596.6 C 1639.7 596.6 1634.1 618.1 1638.4 619.1 M 1532.3 622.4 L 1557.2 623.8 M 1500.0 640.6 C 1505.6 631.3 1511.3 622.4 1519.7 622.4 M 1554.0 635.9 C 1556.3 633.1 1555.3 628.4 1557.2 628.4 M 1556.3 649.1 C 1565.6 648.1 1571.3 633.1 1579.1 632.2 M 1573.5 623.8 L 1579.1 623.8 M 1621.5 621.9 L 1638.4 623.8 M 1655.3 626.6 L 1660.9 631.3 M 1678.1 634.1 L 1781.6 634.1 M 1678.1 635.0 C 1680.0 642.5 1668.8 648.1 1667.8 650.0 M 1669.1 641.8 L 1693.5 641.8 M 1683.8 651.5 L 1693.5 651.5 M 1710.4 646.3 C 1715.6 644.4 1716.6 638.8 1719.0 638.8 M 1728.4 638.8 L 1781.6 638.8 M 1500.0 685.6 L 1535.3 685.6 M 1548.4 685.6 L 1557.2 684.7 M 1609.1 669.7 L 1617.8 669.7 M 1608.8 674.8 L 1617.8 674.8 M 1634.6 667.8 C 1639.7 668.8 1638.8 680.0 1642.9 680.9 M 1577.8 684.7 L 1642.9 685.6 M 1659.8 693.5 L 1672.1 693.5 M 1689.0 695.0 L 1818.4 695.9 M 1689.0 695.9 C 1695.0 698.8 1696.9 711.9 1707.2 714.7 M 1707.8 704.8 L 1731.6 704.8 M 1722.2 714.7 L 1731.6 714.7 M 1747.9 710.0 C 1753.1 708.1 1754.1 700.6 1756.9 700.6 M 1765.9 700.3 L 1818.4 699.7" stroke="#5e5070" stroke-width="1.2" fill="none"/>
<rect x="1533.8" y="577.8" width="48.700000000000045" height="5.600000000000023" rx="2" fill="#dcdcdc" stroke="#3a3a3a" stroke-width="1.2"/><rect x="1533.8" y="577.8" width="16.071000000000016" height="5.600000000000023" rx="2" fill="#8e8e9e" stroke="#3a3a3a" stroke-width="1"/>
<rect x="1587.2" y="577.3" width="17.399999999999864" height="16.100000000000023" rx="1.5" fill="#8e8e9e" stroke="#3a3a3a" stroke-width="1.2"/><rect x="1592.246" y="577.3" width="7.307999999999942" height="16.100000000000023" fill="#333" stroke="#3a3a3a" stroke-width="0.8"/><line x1="1593.246" y1="578.3" x2="1593.246" y2="592.4" stroke="#777" stroke-width="1"/>
<rect x="1568.4" y="596.6" width="40.0" height="5.0" rx="2" fill="#dcdcdc" stroke="#3a3a3a" stroke-width="1.2"/><rect x="1568.4" y="596.6" width="13.200000000000001" height="5.0" rx="2" fill="#8e8e9e" stroke="#3a3a3a" stroke-width="1"/>
<rect x="1567.1" y="601.6" width="40.700000000000045" height="4.899999999999977" rx="2" fill="#dcdcdc" stroke="#3a3a3a" stroke-width="1.2"/><rect x="1567.1" y="601.6" width="13.431000000000015" height="4.899999999999977" rx="2" fill="#8e8e9e" stroke="#3a3a3a" stroke-width="1"/>
<rect x="1615.9" y="590.9" width="16.899999999999864" height="21.200000000000045" rx="1.5" fill="#8e8e9e" stroke="#3a3a3a" stroke-width="1.2"/><rect x="1620.8010000000002" y="590.9" width="7.097999999999942" height="21.200000000000045" fill="#333" stroke="#3a3a3a" stroke-width="0.8"/><line x1="1621.8010000000002" y1="591.9" x2="1621.8010000000002" y2="611.1" stroke="#777" stroke-width="1"/>
<rect x="1638.4" y="615.9" width="16.899999999999864" height="20.600000000000023" rx="1.5" fill="#8e8e9e" stroke="#3a3a3a" stroke-width="1.2"/><rect x="1643.3010000000002" y="615.9" width="7.097999999999942" height="20.600000000000023" fill="#333" stroke="#3a3a3a" stroke-width="0.8"/><line x1="1644.3010000000002" y1="616.9" x2="1644.3010000000002" y2="635.5" stroke="#777" stroke-width="1"/>
<rect x="1519.7" y="619.6" width="12.599999999999909" height="5.699999999999932" rx="2.849999999999966" fill="#8e8e9e" stroke="#3a3a3a" stroke-width="1.2"/>
<rect x="1557.2" y="622.3" width="16.299999999999955" height="10.5" rx="1.5" fill="#8e8e9e" stroke="#3a3a3a" stroke-width="1.2"/><rect x="1561.9270000000001" y="622.3" width="6.8459999999999805" height="10.5" fill="#333" stroke="#3a3a3a" stroke-width="0.8"/><line x1="1562.9270000000001" y1="623.3" x2="1562.9270000000001" y2="631.8" stroke="#777" stroke-width="1"/>
<rect x="1579.1" y="619.6" width="17.5" height="16.299999999999955" rx="1.5" fill="#8e8e9e" stroke="#3a3a3a" stroke-width="1.2"/><rect x="1584.175" y="619.6" width="7.35" height="16.299999999999955" fill="#333" stroke="#3a3a3a" stroke-width="0.8"/><line x1="1585.175" y1="620.6" x2="1585.175" y2="634.9" stroke="#777" stroke-width="1"/>
<rect x="1600.3" y="619.1" width="21.200000000000045" height="15.0" rx="1.5" fill="#8e8e9e" stroke="#3a3a3a" stroke-width="1.2"/><rect x="1606.4479999999999" y="619.1" width="8.90400000000002" height="15.0" fill="#333" stroke="#3a3a3a" stroke-width="0.8"/><line x1="1607.4479999999999" y1="620.1" x2="1607.4479999999999" y2="633.1" stroke="#777" stroke-width="1"/>
<rect x="1510.9" y="633.1" width="43.09999999999991" height="5.2999999999999545" rx="2" fill="#dcdcdc" stroke="#3a3a3a" stroke-width="1.2"/><rect x="1510.9" y="633.1" width="14.22299999999997" height="5.2999999999999545" rx="2" fill="#8e8e9e" stroke="#3a3a3a" stroke-width="1"/>
<rect x="1539.8" y="644.8" width="16.5" height="8.400000000000091" rx="1.5" fill="#8e8e9e" stroke="#3a3a3a" stroke-width="1.2"/><rect x="1544.585" y="644.8" width="6.93" height="8.400000000000091" fill="#333" stroke="#3a3a3a" stroke-width="0.8"/><line x1="1545.585" y1="645.8" x2="1545.585" y2="652.2" stroke="#777" stroke-width="1"/>
<rect x="1660.9" y="625.6" width="17.199999999999818" height="11.299999999999955" rx="1.5" fill="#8e8e9e" stroke="#3a3a3a" stroke-width="1.2"/><rect x="1665.8880000000001" y="625.6" width="7.223999999999923" height="11.299999999999955" fill="#333" stroke="#3a3a3a" stroke-width="0.8"/><line x1="1666.8880000000001" y1="626.6" x2="1666.8880000000001" y2="635.9" stroke="#777" stroke-width="1"/>
<rect x="1629.0" y="639.1" width="40.09999999999991" height="5.2999999999999545" rx="2" fill="#dcdcdc" stroke="#3a3a3a" stroke-width="1.2"/><rect x="1629.0" y="639.1" width="13.23299999999997" height="5.2999999999999545" rx="2" fill="#8e8e9e" stroke="#3a3a3a" stroke-width="1"/>
<rect x="1667.8" y="646.6" width="16.0" height="10.0" rx="1.5" fill="#8e8e9e" stroke="#3a3a3a" stroke-width="1.2"/><rect x="1672.44" y="646.6" width="6.72" height="10.0" fill="#333" stroke="#3a3a3a" stroke-width="0.8"/><line x1="1673.44" y1="647.6" x2="1673.44" y2="655.6" stroke="#777" stroke-width="1"/>
<rect x="1693.5" y="638.4" width="16.90000000000009" height="16.300000000000068" rx="1.5" fill="#8e8e9e" stroke="#3a3a3a" stroke-width="1.2"/><rect x="1698.401" y="638.4" width="7.098000000000038" height="16.300000000000068" fill="#333" stroke="#3a3a3a" stroke-width="0.8"/><line x1="1699.401" y1="639.4" x2="1699.401" y2="653.7" stroke="#777" stroke-width="1"/>
<rect x="1719.0" y="636.5" width="9.400000000000091" height="4.5" rx="2.25" fill="#8e8e9e" stroke="#3a3a3a" stroke-width="1.2"/>
<rect x="1735.3" y="640.6" width="40.299999999999955" height="6.0" rx="2" fill="#dcdcdc" stroke="#3a3a3a" stroke-width="1.2"/><rect x="1735.3" y="640.6" width="13.298999999999985" height="6.0" rx="2" fill="#8e8e9e" stroke="#3a3a3a" stroke-width="1"/>
<rect x="1569.0" y="667.3" width="40.09999999999991" height="5.2000000000000455" rx="2" fill="#dcdcdc" stroke="#3a3a3a" stroke-width="1.2"/><rect x="1569.0" y="667.3" width="13.23299999999997" height="5.2000000000000455" rx="2" fill="#8e8e9e" stroke="#3a3a3a" stroke-width="1"/>
<rect x="1569.0" y="672.5" width="39.799999999999955" height="5.2999999999999545" rx="2" fill="#dcdcdc" stroke="#3a3a3a" stroke-width="1.2"/><rect x="1569.0" y="672.5" width="13.133999999999986" height="5.2999999999999545" rx="2" fill="#8e8e9e" stroke="#3a3a3a" stroke-width="1"/>
<rect x="1617.8" y="662.2" width="16.799999999999955" height="20.59999999999991" rx="1.5" fill="#8e8e9e" stroke="#3a3a3a" stroke-width="1.2"/><rect x="1622.672" y="662.2" width="7.0559999999999805" height="20.59999999999991" fill="#333" stroke="#3a3a3a" stroke-width="0.8"/><line x1="1623.672" y1="663.2" x2="1623.672" y2="681.8" stroke="#777" stroke-width="1"/>
<rect x="1535.3" y="683.4" width="13.100000000000136" height="5.600000000000023" rx="2.8000000000000114" fill="#8e8e9e" stroke="#3a3a3a" stroke-width="1.2"/>
<rect x="1557.2" y="680.9" width="20.59999999999991" height="15.600000000000023" rx="1.5" fill="#8e8e9e" stroke="#3a3a3a" stroke-width="1.2"/><rect x="1563.174" y="680.9" width="8.651999999999962" height="15.600000000000023" fill="#333" stroke="#3a3a3a" stroke-width="0.8"/><line x1="1564.174" y1="681.9" x2="1564.174" y2="695.5" stroke="#777" stroke-width="1"/>
<rect x="1642.9" y="678.1" width="16.899999999999864" height="21.0" rx="1.5" fill="#8e8e9e" stroke="#3a3a3a" stroke-width="1.2"/><rect x="1647.8010000000002" y="678.1" width="7.097999999999942" height="21.0" fill="#333" stroke="#3a3a3a" stroke-width="0.8"/><line x1="1648.8010000000002" y1="679.1" x2="1648.8010000000002" y2="698.1" stroke="#777" stroke-width="1"/>
<rect x="1672.1" y="687.9" width="16.90000000000009" height="11.200000000000045" rx="1.5" fill="#8e8e9e" stroke="#3a3a3a" stroke-width="1.2"/><rect x="1677.001" y="687.9" width="7.098000000000038" height="11.200000000000045" fill="#333" stroke="#3a3a3a" stroke-width="0.8"/><line x1="1678.001" y1="688.9" x2="1678.001" y2="698.1" stroke="#777" stroke-width="1"/>
<rect x="1667.8" y="702.1" width="40.0" height="5.699999999999932" rx="2" fill="#dcdcdc" stroke="#3a3a3a" stroke-width="1.2"/><rect x="1667.8" y="702.1" width="13.200000000000001" height="5.699999999999932" rx="2" fill="#8e8e9e" stroke="#3a3a3a" stroke-width="1"/>
<rect x="1707.2" y="710.0" width="15.0" height="9.799999999999955" rx="1.5" fill="#8e8e9e" stroke="#3a3a3a" stroke-width="1.2"/><rect x="1711.55" y="710.0" width="6.3" height="9.799999999999955" fill="#333" stroke="#3a3a3a" stroke-width="0.8"/><line x1="1712.55" y1="711.0" x2="1712.55" y2="718.8" stroke="#777" stroke-width="1"/>
<rect x="1731.6" y="701.6" width="16.300000000000182" height="16.299999999999955" rx="1.5" fill="#8e8e9e" stroke="#3a3a3a" stroke-width="1.2"/><rect x="1736.327" y="701.6" width="6.8460000000000765" height="16.299999999999955" fill="#333" stroke="#3a3a3a" stroke-width="0.8"/><line x1="1737.327" y1="702.6" x2="1737.327" y2="716.9" stroke="#777" stroke-width="1"/>
<rect x="1756.9" y="698.8" width="9.0" height="4.100000000000023" rx="2.0500000000000114" fill="#8e8e9e" stroke="#3a3a3a" stroke-width="1.2"/>
<rect x="1774.1" y="703.4" width="40.0" height="5.100000000000023" rx="2" fill="#dcdcdc" stroke="#3a3a3a" stroke-width="1.2"/><rect x="1774.1" y="703.4" width="13.200000000000001" height="5.100000000000023" rx="2" fill="#8e8e9e" stroke="#3a3a3a" stroke-width="1"/>
<rect x="1818.4" y="692.8" width="25.699999999999818" height="26.200000000000045" rx="1.5" fill="#8e8e9e" stroke="#3a3a3a" stroke-width="1.2"/><rect x="1825.853" y="692.8" width="10.793999999999922" height="26.200000000000045" fill="#333" stroke="#3a3a3a" stroke-width="0.8"/><line x1="1826.853" y1="693.8" x2="1826.853" y2="718.0" stroke="#777" stroke-width="1"/>
<rect x="1781.6" y="630.9" width="25.90000000000009" height="25.700000000000045" fill="#ff8a10" stroke="#7a3a00" stroke-width="1.2"/><rect x="1791.6" y="630.9" width="6.5" height="25.700000000000045" fill="#333"/>
<defs><linearGradient id="wdg" x1="0" y1="0" x2="0" y2="1"><stop offset="0" stop-color="#ffffff"/><stop offset="0.5" stop-color="#d8d8d8"/><stop offset="1" stop-color="#a8a8a8"/></linearGradient><linearGradient id="box" x1="0" y1="0" x2="0" y2="1"><stop offset="0" stop-color="#c89050"/><stop offset="1" stop-color="#e8b070"/></linearGradient></defs>
<rect x="983" y="968" width="79" height="33.5" fill="url(#wdg)" stroke="#333" stroke-width="1.4"/><rect x="1055" y="969" width="6" height="32" fill="#888" opacity="0.6"/>
<rect x="992" y="975.5" width="18" height="18" rx="3.5" fill="#fff" stroke="#111" stroke-width="2.2"/><rect x="995" y="978.5" width="12" height="12" fill="#e04010"/><path d="M997 980 L997 988 L1004 988" stroke="#ffc000" stroke-width="2.5" fill="none"/><rect x="1002" y="980" width="2.5" height="2.5" fill="#ffc000"/>
<path d="M1026 979 Q1027 975 1031 975 L1041 975 Q1045 975 1046 979 L1046 993 Q1046 995 1043 995 L1029 995 Q1026 995 1026 993Z" fill="url(#box)" stroke="#8a5a20" stroke-width="0.8"/><rect x="1034.5" y="975" width="3" height="10" fill="#a06a30"/>
<defs><radialGradient id="cmp" cx="0.5" cy="0.5" r="0.5"><stop offset="0" stop-color="#eeeeee"/><stop offset="0.7" stop-color="#cfcfcf"/><stop offset="1" stop-color="#a8a8a8"/></radialGradient></defs>
<path d="M1818 960 Q1818 940 1846 936" stroke="#111" stroke-width="4.5" fill="none" stroke-linecap="round"/><path d="M1807 949.5 L1815 946 L1818 955 L1811 956Z" fill="#111"/>
<circle cx="1844" cy="963" r="25" fill="#fff" stroke="#8a8a8a" stroke-width="1.2"/><circle cx="1844" cy="963" r="22.5" fill="url(#cmp)"/>
<path d="M1853.8 949.1 L1852.8 941.7 L1861.0 947.5Z" fill="#fff"/>
<path d="M1857.9 972.8 L1865.3 971.8 L1859.5 980.0Z" fill="#fff"/>
<path d="M1834.2 976.9 L1835.2 984.3 L1827.0 978.5Z" fill="#fff"/>
<path d="M1830.1 953.2 L1822.7 954.2 L1828.5 946.0Z" fill="#fff"/>
<rect x="981" y="1003" width="904" height="27" fill="#f0f0f0" />
<text x="990" y="1024" font-size="13" fill="#333" font-family="Liberation Sans" >...</text>
<text x="1790" y="1023.8" font-size="14" fill="#777" textLength="52.5" lengthAdjust="spacingAndGlyphs" font-family="Liberation Sans" >1.0.0007</text>
<g fill="#999"><rect x="1878" y="1016" width="1.5" height="1.5"/><rect x="1874" y="1020" width="1.5" height="1.5"/><rect x="1878" y="1020" width="1.5" height="1.5"/><rect x="1870" y="1024" width="1.5" height="1.5"/><rect x="1874" y="1024" width="1.5" height="1.5"/><rect x="1878" y="1024" width="1.5" height="1.5"/></g>
<line x1="1884.5" y1="38" x2="1884.5" y2="1031" stroke="#ffffff" stroke-width="1.2" />
<line x1="1886" y1="0" x2="1886" y2="1031" stroke="#a5a8ad" stroke-width="1.5" />
<rect x="0" y="1030" width="1920" height="50" fill="#2a2b2b" />
<rect x="0" y="1030" width="60" height="50" fill="#242526" />
<rect x="60" y="1030" width="429" height="50" fill="#333333" />
<line x1="60.5" y1="1030" x2="60.5" y2="1080" stroke="#4a4a4a" stroke-width="1.2" />
<line x1="489.5" y1="1030" x2="489.5" y2="1080" stroke="#4a4a4a" stroke-width="1.2" />
<g fill="#fff"><path d="M20 1047 L28 1046 L28 1054 L20 1054Z"/><path d="M29.5 1045.8 L39 1044.5 L39 1054 L29.5 1054Z"/><path d="M20 1056 L28 1056 L28 1064 L20 1063Z"/><path d="M29.5 1056 L39 1056 L39 1065.5 L29.5 1064.2Z"/></g>
<circle cx="88" cy="1054" r="7" fill="none" stroke="#ddd" stroke-width="1.6"/><line x1="83" y1="1059" x2="76" y2="1066" stroke="#ddd" stroke-width="1.8"/>
<text x="110" y="1062" font-size="19" fill="#d6d6d6" textLength="163" lengthAdjust="spacingAndGlyphs" font-family="Liberation Sans" >Type here to search</text>
<circle cx="519" cy="1055" r="9" fill="none" stroke="#fff" stroke-width="2.2"/>
<g stroke="#ddd" stroke-width="1.6" fill="none"><rect x="570" y="1048" width="11" height="14"/><line x1="568" y1="1046" x2="583" y2="1046"/><line x1="568" y1="1064" x2="583" y2="1064"/><line x1="588" y1="1044" x2="588" y2="1066"/></g>
<path d="M628 1046 L640 1046 L643 1049 L657 1049 L657 1066 L628 1066Z" fill="#f7c84a"/><rect x="637" y="1058" width="12" height="8" fill="#2a8ad8"/>
<rect x="690" y="1040" width="30" height="30" fill="#d7ebe9" />
<text x="705" y="1064" font-size="24" fill="#1aa1a0" font-weight="bold" text-anchor="middle" font-family="Liberation Sans" >3</text>
<rect x="752" y="1040" width="30" height="30" fill="#f2d8d2" />
<text x="767" y="1066" font-size="26" fill="#c8202a" font-weight="bold" text-anchor="middle" font-family="Liberation Sans" >A</text>
<rect x="815" y="1040" width="30" height="30" fill="#dfe6ef" />
<text x="830" y="1065" font-size="25" fill="#2a6ab8" font-weight="bold" text-anchor="middle" font-family="Liberation Sans" >R</text>
<rect x="877" y="1041" width="28" height="28" fill="#0a1a2e" rx="3" />
<text x="891" y="1061" font-size="15" fill="#30a8ff" font-weight="bold" text-anchor="middle" font-family="Liberation Sans" >Ps</text>
<path d="M953 1055 L940.88 1048.00 A14 14 0 0 1 965.12 1048.00Z" fill="#db4437"/><path d="M953 1055 L965.12 1048.00 A14 14 0 0 1 953.00 1069.00Z" fill="#f4c20d"/><path d="M953 1055 L953.00 1069.00 A14 14 0 0 1 940.88 1048.00Z" fill="#0f9d58"/>
<circle cx="953" cy="1055" r="6.2" fill="#fff"/><circle cx="953" cy="1055" r="4.6" fill="#4285f4"/>
<rect x="928" y="1077.5" width="51" height="2.5" fill="#8cc8f8" />
<defs><linearGradient id="edg" x1="0" y1="1" x2="1" y2="0"><stop offset="0" stop-color="#0a58b8"/><stop offset="0.55" stop-color="#2aa0e0"/><stop offset="1" stop-color="#5ad070"/></linearGradient></defs>
<circle cx="1015" cy="1055" r="15" fill="url(#edg)"/><path d="M1004 1060 Q1006 1050 1016 1050 Q1024 1051 1025 1058 L1013 1058 Q1012 1064 1020 1066 Q1012 1072 1005 1066Z" fill="#1a3a8a" opacity="0.75"/><ellipse cx="1018" cy="1058" rx="6" ry="3.5" fill="#2a2b2b"/>
<rect x="1065" y="1042" width="24" height="27" fill="#f6e4e4"/><rect x="1066" y="1058" width="22" height="9" fill="#d42a2a"/><text x="1077" y="1065" font-size="7" fill="#fff" text-anchor="middle" font-family="Liberation Sans">PDF</text><rect x="1070" y="1046" width="14" height="10" fill="#e05050"/>
<rect x="1136" y="1043" width="20" height="23" fill="#f6f6f6" stroke="#d04a26" stroke-width="1"/><path d="M1141 1050 L1152 1050 M1141 1055 L1152 1055 M1141 1060 L1150 1060" stroke="#d04a26" stroke-width="1.5"/><path d="M1125 1044 L1141 1041 L1141 1069 L1125 1066Z" fill="#d24726"/>
<text x="1132" y="1062" font-size="15" fill="#fff" font-weight="bold" text-anchor="middle" font-family="Liberation Sans" >P</text>
<rect x="1115" y="1077.5" width="51" height="2.5" fill="#8cc8f8" />
<rect x="1172" y="1030" width="60" height="50" fill="#4a4a4a" />
<g transform="translate(1185,1040) scale(1.6)"><rect x="0" y="0" width="20" height="19" fill="#000"/><path d="M0 10 L2 9 L5.5 12 L4 8 L6 7 L9 9 L12 12 L20 10 L20 11.5 L12 18 L10.5 19 L9.5 19 L0 12.5Z" fill="#fff"/><path d="M5.5 0.5 L7 0.5 Q9 4 8.5 8 L6.5 7 Q6 3 5.5 0.5Z" fill="#fff"/></g><text x="1211" y="1050" font-size="11" fill="#fff" font-family="Liberation Sans">7</text>
<rect x="1172" y="1077.5" width="60" height="2.5" fill="#8cc8f8" />
<path d="M1424 1064 Q1418 1064 1419 1058 Q1420 1053 1426 1054 Q1428 1046 1437 1047 Q1446 1048 1446 1056 Q1451 1057 1450 1062 Q1449 1065 1444 1064Z" fill="#a8d4f2"/>
<text x="1460" y="1065" font-size="19" fill="#ffffff" textLength="100" lengthAdjust="spacingAndGlyphs" font-family="Liberation Sans" >64°F  Cloudy</text>
<path d="M1582 1062 L1589 1054 L1596 1062" stroke="#fff" stroke-width="1.6" fill="none"/>
<g stroke="#ddd" stroke-width="1.4" fill="none"><rect x="1613" y="1050" width="11" height="14" rx="2"/><rect x="1641" y="1051" width="18" height="10"/><path d="M1672 1050 L1676 1050 L1681 1046 L1681 1064 L1676 1060 L1672 1060Z"/><path d="M1686 1050 Q1690 1055 1686 1060 M1690 1047 Q1696 1055 1690 1063"/><path d="M1704 1065 Q1710 1050 1721 1046 M1709 1065 Q1713 1056 1721 1053"/></g>
<rect x="1642" y="1052" width="11" height="8" fill="#ddd" />
<text x="1742" y="1063" font-size="17" fill="#ffffff" font-family="Liberation Sans" >ε</text>
<text x="1782" y="1050" font-size="16" fill="#ffffff" textLength="60" lengthAdjust="spacingAndGlyphs" font-family="Liberation Sans" >10:43 PM</text>
<text x="1777" y="1073" font-size="16" fill="#ffffff" textLength="68" lengthAdjust="spacingAndGlyphs" font-family="Liberation Sans" >12/1/2021</text>
<path d="M1868 1045 L1889 1045 L1889 1061 L1877 1061 L1872 1066 L1872 1061 L1868 1061Z" stroke="#ddd" stroke-width="1.4" fill="none"/>
<line x1="1913.5" y1="1030" x2="1913.5" y2="1080" stroke="#555" stroke-width="1" /></svg></body></html>
